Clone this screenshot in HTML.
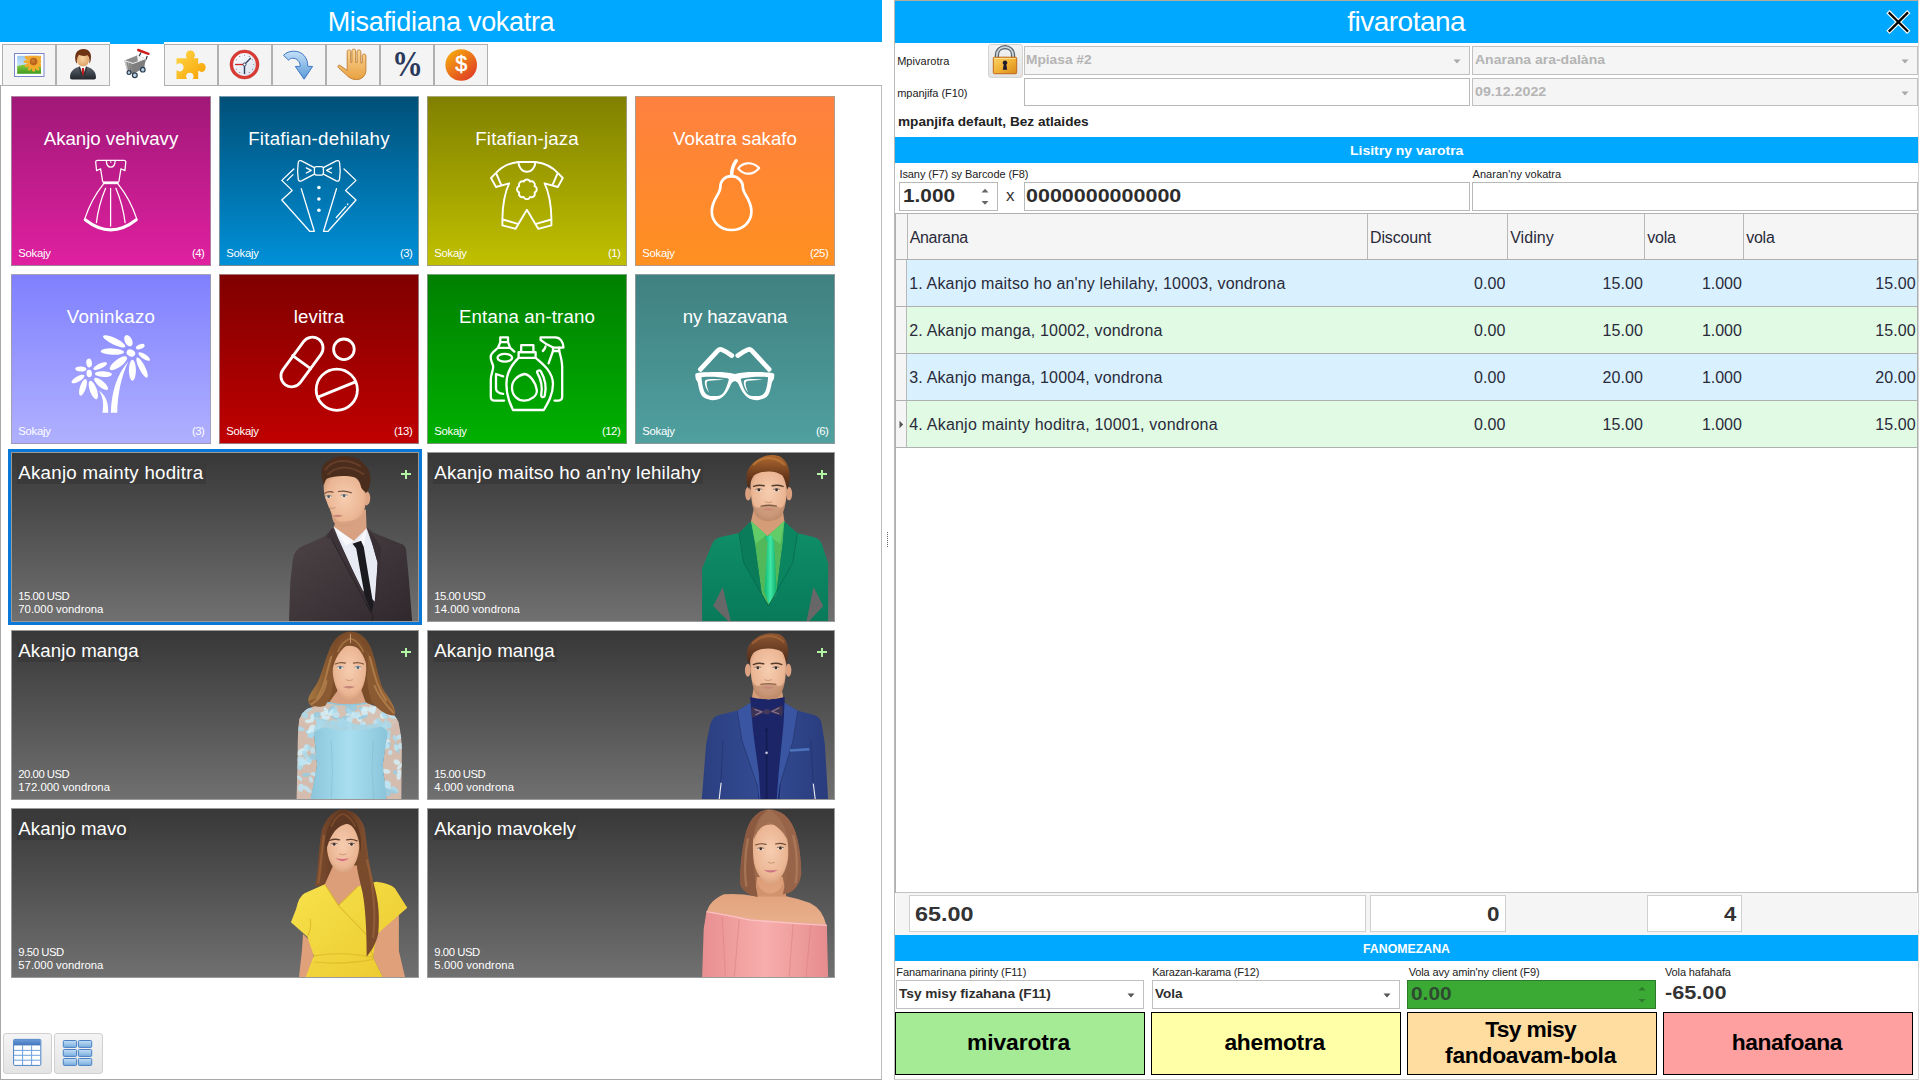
<!DOCTYPE html>
<html><head><meta charset="utf-8"><title>POS</title><style>
html,body{margin:0;padding:0}
body{width:1920px;height:1080px;position:relative;overflow:hidden;background:#fff;font-family:'Liberation Sans',sans-serif}
body>div,body>span,body>svg{position:absolute;box-sizing:border-box}
.t{white-space:pre;line-height:1em}
</style></head>
<body>
<div style="left:0px;top:0px;width:882px;height:42px;background:#00a8ff"></div>
<span class="t" style="left:327.70px;top:9.04px;font-size:27px;color:#fff;letter-spacing:-0.317px;">Misafidiana vokatra</span>
<div style="left:0px;top:85px;width:882px;height:995px;border:1px solid;border-color:#b0b0b0 #bcbcbc #a8a8a8 #a8a8a8;background:#fff"></div>
<div style="left:2px;top:44px;width:54px;height:42px;border:1px solid #b0b0b0;background:#f4f4f4"></div>
<div style="left:56px;top:44px;width:54px;height:42px;border:1px solid #b0b0b0;background:#f4f4f4"></div>
<div style="left:110px;top:42px;width:54px;height:2px;background:#00a8ff"></div>
<div style="left:110px;top:44px;width:54px;height:43px;background:#fff"></div>
<div style="left:164px;top:44px;width:54px;height:42px;border:1px solid #b0b0b0;background:#f4f4f4"></div>
<div style="left:218px;top:44px;width:54px;height:42px;border:1px solid #b0b0b0;background:#f4f4f4"></div>
<div style="left:272px;top:44px;width:54px;height:42px;border:1px solid #b0b0b0;background:#f4f4f4"></div>
<div style="left:326px;top:44px;width:54px;height:42px;border:1px solid #b0b0b0;background:#f4f4f4"></div>
<div style="left:380px;top:44px;width:54px;height:42px;border:1px solid #b0b0b0;background:#f4f4f4"></div>
<div style="left:434px;top:44px;width:54px;height:42px;border:1px solid #b0b0b0;background:#f4f4f4"></div>
<svg style="left:0;top:44px" width="490" height="42" viewBox="0 44 490 42"><defs>
<linearGradient id="gsky" x1="0" y1="0" x2="0" y2="1"><stop offset="0" stop-color="#9ccaf0"/><stop offset="1" stop-color="#e8f4ff"/></linearGradient>
<linearGradient id="ggrass" x1="0" y1="0" x2="0" y2="1"><stop offset="0" stop-color="#8ccc48"/><stop offset="1" stop-color="#3f9a1c"/></linearGradient>
<radialGradient id="gface" cx=".45" cy=".4" r=".7"><stop offset="0" stop-color="#fbd5a5"/><stop offset="1" stop-color="#d99a5c"/></radialGradient>
<linearGradient id="gsuit" x1="0" y1="0" x2="0" y2="1"><stop offset="0" stop-color="#5a626c"/><stop offset="1" stop-color="#22262c"/></linearGradient>
<linearGradient id="gpuz" x1="0" y1="0" x2="1" y2="1"><stop offset="0" stop-color="#ffd84a"/><stop offset="1" stop-color="#f8a000"/></linearGradient>
<linearGradient id="gclk" x1="0" y1="0" x2="1" y2="1"><stop offset="0" stop-color="#ffffff"/><stop offset="1" stop-color="#d4dcec"/></linearGradient>
<linearGradient id="garr" x1="0" y1="0" x2="0" y2="1"><stop offset="0" stop-color="#c4e0f8"/><stop offset="1" stop-color="#5a9ad8"/></linearGradient>
<linearGradient id="ghand" x1="0" y1="0" x2="0" y2="1"><stop offset="0" stop-color="#fbd79a"/><stop offset="1" stop-color="#e8a040"/></linearGradient>
<linearGradient id="gcoin" x1="0.15" y1="0.1" x2="0.85" y2="0.95"><stop offset="0" stop-color="#f4a410"/><stop offset="1" stop-color="#e03c24"/></linearGradient>
<linearGradient id="gcart" x1="0" y1="0" x2="1" y2="0"><stop offset="0" stop-color="#d8d8d8"/><stop offset="1" stop-color="#7a7a7a"/></linearGradient>
</defs><rect x="14.5" y="53.5" width="29.5" height="23" fill="#fff" stroke="#7a86cc" stroke-width="1"/><rect x="17.2" y="55.8" width="23.8" height="18" fill="url(#gsky)"/><path d="M17.2 66 Q24 63.5 29 65 Q35 67 41 64.5 V73.8 H17.2Z" fill="url(#ggrass)"/><clipPath id="picc"><rect x="17.2" y="55.8" width="23.8" height="18"/></clipPath><g clip-path="url(#picc)"><g transform="translate(33.6 61.6)"><ellipse cx="0" cy="-6.600" rx="1.700" ry="3.600" fill="#f6aa2c" transform="rotate(0)"/><ellipse cx="0" cy="-6.600" rx="1.700" ry="3.600" fill="#f6aa2c" transform="rotate(30)"/><ellipse cx="0" cy="-6.600" rx="1.700" ry="3.600" fill="#f6aa2c" transform="rotate(60)"/><ellipse cx="0" cy="-6.600" rx="1.700" ry="3.600" fill="#f6aa2c" transform="rotate(90)"/><ellipse cx="0" cy="-6.600" rx="1.700" ry="3.600" fill="#f6aa2c" transform="rotate(120)"/><ellipse cx="0" cy="-6.600" rx="1.700" ry="3.600" fill="#f6aa2c" transform="rotate(150)"/><ellipse cx="0" cy="-6.600" rx="1.700" ry="3.600" fill="#f6aa2c" transform="rotate(180)"/><ellipse cx="0" cy="-6.600" rx="1.700" ry="3.600" fill="#f6aa2c" transform="rotate(210)"/><ellipse cx="0" cy="-6.600" rx="1.700" ry="3.600" fill="#f6aa2c" transform="rotate(240)"/><ellipse cx="0" cy="-6.600" rx="1.700" ry="3.600" fill="#f6aa2c" transform="rotate(270)"/><ellipse cx="0" cy="-6.600" rx="1.700" ry="3.600" fill="#f6aa2c" transform="rotate(300)"/><ellipse cx="0" cy="-6.600" rx="1.700" ry="3.600" fill="#f6aa2c" transform="rotate(330)"/><circle r="3.8" fill="#b8641c"/><circle r="2" cx="-.5" cy="-.5" fill="#cc7a2a"/></g></g><rect x="36" y="55.8" width="5" height="18" fill="none"/><path d="M70 77.5 C70 71 74 68.5 78.5 67 L83 70 L87.5 67 C92 68.5 96 71 96 77.5 Q96 79.6 93 79.6 H73 Q70 79.6 70 77.5Z" fill="url(#gsuit)"/><path d="M79.2 66.8 L83 78 L86.8 66.8 L83 65Z" fill="#fff"/><path d="M82 68 H84 L84.9 75.5 L83 78.5 L81.1 75.5Z" fill="#c81e1e"/><path d="M78.5 67 L80 66.3 L83.2 77 L82 79.6 Z M87.5 67 L86 66.3 L82.8 77 L84 79.6Z" fill="#30353c"/><ellipse cx="83" cy="59.6" rx="6.1" ry="7" fill="url(#gface)"/><path d="M75.3 59.5 C74.3 52 79 48.6 83.5 48.9 C89 49 92 53 90.8 59.5 C90.6 61.5 90 63 89.2 63.5 C89.8 60 89.5 57 87.5 55.2 C85 56.3 81 56 79.2 54.8 C77.3 56.5 76.5 60 77 63.5 C76 63 75.5 61.5 75.3 59.5Z" fill="#6e3414"/><path d="M141 52.5 L138.5 57.5 M147.2 56 L145.8 60" stroke="#38404a" stroke-width="1.3" fill="none"/><path d="M138.2 50 L148.5 53.8" stroke="#cc1c1c" stroke-width="2.4" stroke-linecap="round"/><path d="M124.3 60.5 L137 55.5 L146 58.5 L144 68 L132.5 74 L127.5 71.5Z" fill="#8c8c8c"/><path d="M137 55.5 L146 58.5 L144.5 66 L138 62Z" fill="#f4f4f4"/><path d="M124.3 60.5 L133 63.5 L132.5 74 L127.5 71.5Z" fill="url(#gcart)"/><path d="M133 63.5 L146 58.5 L144 68 L132.5 74Z" fill="#7e7e7e"/><path d="M124.3 60.5 L133 63.5 L146 58.5" stroke="#efefef" stroke-width="1" fill="none"/><path d="M127 62 L129.3 71.8 M129.5 63 L131 72.6" stroke="#6a6a6a" stroke-width=".7"/><circle cx="129" cy="72.6" r="1.9" fill="#b8d0e4" stroke="#2c3c50" stroke-width="1.2"/><circle cx="134.8" cy="75.2" r="2.4" fill="#b8d0e4" stroke="#2c3c50" stroke-width="1.2"/><circle cx="142.8" cy="69.7" r="2.3" fill="#b8d0e4" stroke="#2c3c50" stroke-width="1.2"/><path d="M176.5 58.3 H187.2 C185.6 56.5 185.4 53.6 187 51.9 C188.8 50 192 50 193.8 51.9 C195.4 53.6 195.2 56.5 193.6 58.3 H198.2 V64.2 C200 62.6 203 62.5 204.5 64.2 C206.2 66 206 69.5 204.2 71 C202.5 72.4 200 72.2 198.2 70.6 V78.9 H192.6 C193.8 77.4 193.9 75.2 192.6 73.8 C191.2 72.3 188.4 72.3 187 73.8 C185.7 75.2 185.8 77.4 187 78.9 H176.5 V70.3 C178.3 71.8 181 71.9 182.5 70.3 C184 68.6 183.9 65.8 182.3 64.3 C180.7 62.9 178.2 63.1 176.5 64.6Z" fill="url(#gpuz)"/><circle cx="244.5" cy="64.5" r="13" fill="url(#gclk)" stroke="#d93a34" stroke-width="3.2"/><circle cx="244.5" cy="64.5" r="14.6" fill="none" stroke="#b82a26" stroke-width=".6" opacity=".6"/><path d="M244.5 64.5 L250.8 58" stroke="#2c3c5c" stroke-width="1.2"/><path d="M244.5 64.5 V74" stroke="#2c3c5c" stroke-width="1.4"/><path d="M244.5 64.5 H235.2" stroke="#d42020" stroke-width="1.3"/><circle cx="244.5" cy="64.5" r="1.5" fill="#fff" stroke="#2c3c5c" stroke-width=".9"/><circle cx="244.5" cy="55.2" r=".45" fill="#445" transform="rotate(0 244.5 64.5)"/><circle cx="244.5" cy="55.2" r=".45" fill="#445" transform="rotate(30 244.5 64.5)"/><circle cx="244.5" cy="55.2" r=".45" fill="#445" transform="rotate(60 244.5 64.5)"/><circle cx="244.5" cy="55.2" r=".45" fill="#445" transform="rotate(90 244.5 64.5)"/><circle cx="244.5" cy="55.2" r=".45" fill="#445" transform="rotate(120 244.5 64.5)"/><circle cx="244.5" cy="55.2" r=".45" fill="#445" transform="rotate(150 244.5 64.5)"/><circle cx="244.5" cy="55.2" r=".45" fill="#445" transform="rotate(180 244.5 64.5)"/><circle cx="244.5" cy="55.2" r=".45" fill="#445" transform="rotate(210 244.5 64.5)"/><circle cx="244.5" cy="55.2" r=".45" fill="#445" transform="rotate(240 244.5 64.5)"/><circle cx="244.5" cy="55.2" r=".45" fill="#445" transform="rotate(270 244.5 64.5)"/><circle cx="244.5" cy="55.2" r=".45" fill="#445" transform="rotate(300 244.5 64.5)"/><circle cx="244.5" cy="55.2" r=".45" fill="#445" transform="rotate(330 244.5 64.5)"/><path d="M283.5 55.3 C286 52.500 290 51.2 293.8 51.2 C302.5 51.2 307.8 57.5 307.8 66.400 H312.6 L304.100 79.2 L295.3 66.4 H300.2 C300.2 61.5 297 58.2 292.2 58.2 C290.8 58.2 289.6 59 288.700 60.3Z" fill="url(#garr)" stroke="#3f78c4" stroke-width="1" stroke-linejoin="round"/><path d="M347.2 70.5 V51.600 C347.2 49.4 350.7 49.4 350.700 51.6 V62.5 H351.9 V50.8 C351.9 48.6 355.7 48.6 355.700 50.800 V62.5 H357.1 V51.6 C357.1 49.400 360.8 49.4 360.8 51.6 V63 H362.2 V55.7 C362.200 53.5 365.9 53.5 365.9 55.700 V70 C365.9 76 361.5 79.6 356.5 79.600 C351.5 79.6 349 77.5 346.5 75 L338.4 67.600 C337 66 338.8 64.4 340.4 65.600Z" fill="url(#ghand)" stroke="#c07a2c" stroke-width=".9" stroke-linejoin="round"/><circle cx="461.2" cy="65" r="15.8" fill="url(#gcoin)"/></svg>
<span class="t" style="left:391.5px;top:45.5px;font-family:'Liberation Serif',serif;font-weight:700;font-size:36px;color:#2b3a5c;transform:scaleX(0.86);transform-origin:0 0">%</span>
<span class="t" style="left:455.22px;top:54.20px;font-size:21.5px;color:#fff;-webkit-text-stroke:0.45px #fff;">$</span>
<div style="left:11px;top:96px;width:200px;height:170px;background:linear-gradient(#a01878,#e020a0);border:1px solid rgba(160,160,160,.75)"></div>
<span class="t" style="left:43.80px;top:129.67px;font-size:18.7px;color:#fff;letter-spacing:-0.043px;">Akanjo vehivavy</span>
<span class="t" style="left:18.30px;top:247.83px;font-size:11.3px;color:#fff;letter-spacing:-0.254px;">Sokajy</span>
<span class="t" style="left:192.00px;top:247.83px;font-size:11.3px;color:#fff;letter-spacing:-0.538px;">(4)</span>
<div style="left:219px;top:96px;width:200px;height:170px;background:linear-gradient(#005078,#0090d8);border:1px solid rgba(160,160,160,.75)"></div>
<span class="t" style="left:248.15px;top:129.67px;font-size:18.7px;color:#fff;letter-spacing:0.269px;">Fitafian-dehilahy</span>
<span class="t" style="left:226.30px;top:247.83px;font-size:11.3px;color:#fff;letter-spacing:-0.254px;">Sokajy</span>
<span class="t" style="left:400.00px;top:247.83px;font-size:11.3px;color:#fff;letter-spacing:-0.538px;">(3)</span>
<div style="left:427px;top:96px;width:200px;height:170px;background:linear-gradient(#808000,#c0c000);border:1px solid rgba(160,160,160,.75)"></div>
<span class="t" style="left:475.35px;top:129.67px;font-size:18.7px;color:#fff;letter-spacing:0.116px;">Fitafian-jaza</span>
<span class="t" style="left:434.30px;top:247.83px;font-size:11.3px;color:#fff;letter-spacing:-0.254px;">Sokajy</span>
<span class="t" style="left:608.00px;top:247.83px;font-size:11.3px;color:#fff;letter-spacing:-0.538px;">(1)</span>
<div style="left:635px;top:96px;width:200px;height:170px;background:linear-gradient(#ff8040,#ff9020);border:1px solid rgba(160,160,160,.75)"></div>
<span class="t" style="left:673.00px;top:129.67px;font-size:18.7px;color:#fff;letter-spacing:0.027px;">Vokatra sakafo</span>
<span class="t" style="left:642.30px;top:247.83px;font-size:11.3px;color:#fff;letter-spacing:-0.254px;">Sokajy</span>
<span class="t" style="left:810.00px;top:247.83px;font-size:11.3px;color:#fff;letter-spacing:-0.473px;">(25)</span>
<div style="left:11px;top:274px;width:200px;height:170px;background:linear-gradient(#8080ff,#b0b0ff);border:1px solid rgba(160,160,160,.75)"></div>
<span class="t" style="left:66.75px;top:307.67px;font-size:18.7px;color:#fff;letter-spacing:0.250px;">Voninkazo</span>
<span class="t" style="left:18.30px;top:425.83px;font-size:11.3px;color:#fff;letter-spacing:-0.254px;">Sokajy</span>
<span class="t" style="left:192.00px;top:425.83px;font-size:11.3px;color:#fff;letter-spacing:-0.538px;">(3)</span>
<div style="left:219px;top:274px;width:200px;height:170px;background:linear-gradient(#800000,#c00000);border:1px solid rgba(160,160,160,.75)"></div>
<span class="t" style="left:293.80px;top:307.67px;font-size:18.7px;color:#fff;letter-spacing:0.077px;">levitra</span>
<span class="t" style="left:226.30px;top:425.83px;font-size:11.3px;color:#fff;letter-spacing:-0.254px;">Sokajy</span>
<span class="t" style="left:394.00px;top:425.83px;font-size:11.3px;color:#fff;letter-spacing:-0.473px;">(13)</span>
<div style="left:427px;top:274px;width:200px;height:170px;background:linear-gradient(#008000,#00b000);border:1px solid rgba(160,160,160,.75)"></div>
<span class="t" style="left:459.00px;top:307.67px;font-size:18.7px;color:#fff;letter-spacing:0.131px;">Entana an-trano</span>
<span class="t" style="left:434.30px;top:425.83px;font-size:11.3px;color:#fff;letter-spacing:-0.254px;">Sokajy</span>
<span class="t" style="left:602.00px;top:425.83px;font-size:11.3px;color:#fff;letter-spacing:-0.473px;">(12)</span>
<div style="left:635px;top:274px;width:200px;height:170px;background:linear-gradient(#408080,#50a0a0);border:1px solid rgba(160,160,160,.75)"></div>
<span class="t" style="left:682.75px;top:307.67px;font-size:18.7px;color:#fff;letter-spacing:-0.135px;">ny hazavana</span>
<span class="t" style="left:642.30px;top:425.83px;font-size:11.3px;color:#fff;letter-spacing:-0.254px;">Sokajy</span>
<span class="t" style="left:816.00px;top:425.83px;font-size:11.3px;color:#fff;letter-spacing:-0.538px;">(6)</span>
<svg style="left:0;top:96px" width="882" height="350" viewBox="0 96 882 350" fill="none" stroke="#fff" stroke-linecap="round" stroke-linejoin="round"><g stroke-width="1.25"><path d="M106.3 160.4 H97.5 Q95.6 160.4 95.7 162.3 L96.6 170.6 L100.6 168.8 L102.6 181.3 M115.2 160.4 H124 Q125.9 160.4 125.8 162.3 L124.9 170.6 L120.9 168.8 L118.9 181.3"/><path d="M106.3 160.4 Q106.6 167.2 110.75 167.2 Q114.9 167.2 115.2 160.4Z"/><path d="M103.2 184.3 C97 192 89 206 84.8 218.6 M118.3 184.3 C124.5 192 132.5 206 136.7 218.6"/><path d="M110.6 188.3 V226 M105.6 188.3 C101.5 198 98 210 96.4 222.6 M115.9 188.3 C120 198 123.5 210 125.1 222.6"/></g><path d="M102.8 182.8 H118.7" stroke-width="2.8" stroke-linecap="butt"/><path d="M85.2 219.8 Q110.75 240 136.3 219.8" stroke-width="3"/><circle cx="110.8" cy="162" r=".8" fill="#fff" stroke="none"/><g stroke-width="1.3"><path d="M314.4 167.6 L301.5 160.9 Q298.6 159.6 298.2 163 Q297 170.8 298.2 178.6 Q298.6 182 301.5 180.8 L314.4 174.2"/><path d="M323.4 167.6 L336.3 160.9 Q339.2 159.6 339.6 163 Q340.8 170.8 339.6 178.6 Q339.2 182 336.3 180.8 L323.4 174.2"/><rect x="314.4" y="166.6" width="9" height="8.5" rx="2"/><path d="M306.3 167.9 L311.2 170.4 L306.3 173 M331.5 167.9 L326.6 170.4 L331.5 173"/><path d="M293.8 169 L281.8 180.4 L292.2 190.4 L281.8 200 L309.7 231.3 H314.3 L301.3 188.7"/><path d="M344 169 L356 180.4 L345.6 190.4 L356 200 L328.1 231.3 H323.5 L336.5 188.7"/><path d="M293 174.6 L287.2 180.4 M345.8 206.6 L336.3 217.5 M347.4 204.6 L347.9 204"/></g><circle cx="318.9" cy="187.5" r="1.8" fill="#fff" stroke="none"/><circle cx="318.9" cy="199" r="1.8" fill="#fff" stroke="none"/><circle cx="318.9" cy="210.3" r="1.8" fill="#fff" stroke="none"/><g stroke-width="1.9"><path d="M518.4 162 H535.4 M518.4 162 C509 163 500.5 168 495.8 173.2 L491 178 L496 187 L509.2 183.3 C505 192 502.6 204 502.4 219.3 V225.4 L515.6 228.8 L526.9 209.8 L538.2 228.8 L551.4 225.4 V219.3 C551.2 204 548.8 192 544.6 183.3 L557.8 187 L562.8 178 L558 173.2 C553.3 168 544.8 163 535.4 162"/><path d="M518.4 162 A8.5 9.8 0 0 0 535.4 162"/><path d="M496.5 174 L501.2 184.8 M557.3 174 L552.6 184.8 M502.6 219.5 L517.8 223.8 M551.2 219.5 L536 223.8"/><path d="M523.72 181.63 A3.4 3.4 0 0 1 530.08 181.63 A3.4 3.4 0 0 1 534.57 186.12 A3.4 3.4 0 0 1 534.57 192.48 A3.4 3.4 0 0 1 530.08 196.97 A3.4 3.4 0 0 1 523.72 196.97 A3.4 3.4 0 0 1 519.23 192.48 A3.4 3.4 0 0 1 519.23 186.12 A3.4 3.4 0 0 1 523.72 181.63 Z"/></g><path d="M731.3 176.2 C724 176.5 720.3 181.5 720.3 187.5 C720.3 194 711.8 199.5 711.8 211.5 C711.8 222 720.5 230 731.6 230 C742.7 230 751.4 222 751.4 211.5 C751.4 199.5 742.9 194 742.9 187.5 C742.9 181.5 738.6 176.5 731.3 176.2Z" stroke-width="2.7"/><path d="M731.6 175.5 C731.6 169.5 733.5 164.5 736.2 160.8" stroke-width="3.6"/><path d="M738.2 168.6 C742 162.5 751.5 160.8 759.2 168 C753 175.5 744 175.5 738.2 168.6Z" stroke-width="2.2"/><g fill="#fff" stroke="none"><ellipse cx="114.2" cy="341.3" rx="12.25" ry="3.3" transform="rotate(26 114.2 341.3)"/><ellipse cx="128.4" cy="340.7" rx="6.0" ry="3.6" transform="rotate(62 128.4 340.7)"/><ellipse cx="140.3" cy="346.6" rx="4.6" ry="2.3" transform="rotate(-22 140.3 346.6)"/><ellipse cx="112.4" cy="351.6" rx="11.75" ry="3.2" transform="rotate(2 112.4 351.6)"/><ellipse cx="144.2" cy="356.5" rx="6.75" ry="2.4" transform="rotate(33 144.2 356.5)"/><ellipse cx="118.4" cy="363.2" rx="10.5" ry="3.8" transform="rotate(-37 118.4 363.2)"/><ellipse cx="132.4" cy="370.3" rx="10.5" ry="3.5" transform="rotate(90 132.4 370.3)"/><ellipse cx="142.1" cy="367.6" rx="11.25" ry="3.0" transform="rotate(63 142.1 367.6)"/><ellipse cx="130.9" cy="353" rx="4.5" ry="3.3" transform="rotate(28 130.9 353)"/><ellipse cx="89.1" cy="363" rx="4.4" ry="2.8" transform="rotate(82 89.1 363)"/><ellipse cx="100.2" cy="366.1" rx="7.5" ry="2.5" transform="rotate(-25 100.2 366.1)"/><ellipse cx="80.8" cy="369" rx="5.6" ry="2.5" transform="rotate(2 80.8 369)"/><ellipse cx="103.4" cy="374.1" rx="8.5" ry="2.9" transform="rotate(3 103.4 374.1)"/><ellipse cx="78" cy="379" rx="7.3" ry="2.7" transform="rotate(-30 78 379)"/><ellipse cx="83" cy="387.3" rx="8.75" ry="3.0" transform="rotate(-72 83 387.3)"/><ellipse cx="93.3" cy="390" rx="9.75" ry="3.5" transform="rotate(70 93.3 390)"/><ellipse cx="101.1" cy="383.9" rx="8.75" ry="3.1" transform="rotate(40 101.1 383.9)"/><ellipse cx="89.2" cy="373.5" rx="3.7" ry="2.7" transform="rotate(85 89.2 373.5)"/><path d="M110.8 412.8 C111.5 392 117 374 128.3 361.5 C121.5 376 117.5 394 117.2 412.8Z"/><path d="M102.4 412.8 C104.2 404 102.8 396.5 99 390.8 C105 394.5 108.6 402 108.2 412.8Z"/></g><g stroke-width="2.8"><rect x="273.8" y="351.2" width="56.4" height="21.6" rx="10.8" transform="rotate(-53.8 302 362)"/><path d="M292.7 355.6 L310.6 368.7"/><circle cx="343.9" cy="349.3" r="10.3"/><circle cx="336.8" cy="389.7" r="20.6"/><path d="M318.6 396.9 L355.4 381.9"/></g><g stroke-width="2.3"><rect x="521.2" y="345.2" width="12.2" height="7" /><rect x="518.6" y="352.2" width="17" height="5.6"/><path d="M518.6 357.8 C512 364 506.4 372 506.4 384 C506.4 394 509 402 513 410 H543.8 C548.5 402 553 394 553 384 C553 372 543 364 535.6 357.8"/><path d="M524.5 374 C517 375.5 511.8 381 512 388 C512.3 396 518 401 524.5 400.6 C531 400.3 537.5 396 536.8 390 C536 383 530 374.5 524.5 374Z"/><path d="M537.2 372.6 C536.5 370.5 540 369.5 541 371.6 C545.5 379.5 546.5 388 544.8 395.5 C544.2 398 540.8 397.5 541.2 395 C542.5 388 541.5 380 537.2 372.6Z"/><path d="M500.3 342.2 V337.4 H508 V342.2 M498 347.8 L500.3 342.2 H508 L510.2 347.8 M514.3 351.6 L510.2 347.8 H498 C495.5 350.5 491.5 352.5 490.8 356 C490 360.5 493.2 363.5 493.2 366.8 C493.2 371 490.8 374 490.8 380 V396.8 Q490.8 400.6 494.6 400.6 H504.2"/><ellipse cx="504.8" cy="357.7" rx="7.3" ry="3.9"/><path d="M503.2 376.4 L496 374 V388.5 Q496 393 503.2 393.8"/><path d="M540.6 337.4 H555.5 C560 337.4 563.4 342 563.5 347.6 H553 L545.4 343.4 L540.6 340Z"/><path d="M545.6 346.4 C545 348.5 544 350 542.8 351"/><path d="M553 347.6 V351 L548.6 363.4 M559.2 347.6 V350.8 C560.5 356 562.2 361 562.2 367 V396.6 Q562.2 400.6 558.4 400.6 H554.5"/><path d="M553 351 H559.2"/></g><g fill="#fff" stroke="none"><path fill-rule="evenodd" d="M734.8 373.9 C729 372.6 722 372.1 717.3 372.1 C710 372.1 704 372.3 700.7 372.5 C697 372.7 695.1 373.3 695.25 375 C695.4 376.5 695.5 377.8 695.8 379 C696.3 380.5 697.3 381.2 697.7 382.4 C698.5 386.5 699.3 390.5 700.7 393.8 C702 396.5 703.5 397.8 705.7 398.6 C708 399.5 710 400.1 712.3 400.2 C715 400.3 717.5 399.8 719.8 398.8 C722.2 397.6 724.2 395.8 725.7 393.8 C727.8 391 729.3 388 730.7 384.7 C731.5 383 732.2 382.2 733.2 381.7 C733.8 381.4 734.3 381.3 734.8 381.3 C735.3 381.3 735.8 381.4 736.4 381.7 C737.4 382.2 738.1 383 738.9 384.7 C740.3 388 741.8 391 743.9 393.8 C745.4 395.8 747.4 397.6 749.8 398.8 C752.1 399.8 754.6 400.3 757.3 400.2 C759.6 400.1 761.6 399.5 763.9 398.6 C766.1 397.8 767.6 396.5 768.9 393.8 C770.3 390.5 771.1 386.5 771.9 382.4 C772.3 381.2 773.3 380.5 773.8 379 C774.1 377.8 774.2 376.5 774.35 375 C774.5 373.3 772.6 372.7 768.9 372.5 C765.6 372.3 759.6 372.1 752.3 372.1 C747.6 372.1 740.6 372.6 734.8 373.9Z M701.6 378.4 C701.3 377.500 701.800 377 702.800 376.900 C711 376.300 720 376.800 727.400 378.200 C728.600 378.500 729 379.200 728.600 380.400 C727.300 385 725.800 389.200 723.6 392.600 C722 394.800 719.800 395.900 717.3 396 C715 396.100 712.800 396.100 710.7 395.900 C708 395.600 705.900 394.300 704.4 391.750 C702.800 388 702 383 701.6 378.4Z M768 378.4 C768.3 377.5 767.8 377 766.8 376.9 C758.6 376.3 749.6 376.8 742.2 378.2 C741 378.5 740.6 379.2 741 380.4 C742.3 385 743.8 389.2 746 392.6 C747.6 394.8 749.8 395.9 752.3 396 C754.6 396.1 756.8 396.1 758.9 395.9 C761.6 395.6 763.7 394.3 765.2 391.75 C766.8 388 767.6 383 768 378.4Z"/><path d="M709.2 392.4 C707 390 705.600 387.500 705.2 385.200 C704.700 383 704.700 381.800 705 380.900 C705.400 379.800 706.500 379.300 709 379.150 C714 378.800 719.500 379 724.2 379.700 C719 379.900 713 380.200 709.500 380.700 C707.500 381 706.600 381.700 706.600 383.200 C706.600 386 707.600 389.500 709.2 392.400Z"/><path d="M748.2 392.4 C746 390 744.6 387.5 744.2 385.2 C743.7 383 743.7 381.8 744 380.9 C744.4 379.8 745.5 379.3 748 379.15 C753 378.8 758.5 379 763.2 379.7 C758 379.9 752 380.2 748.5 380.7 C746.5 381 745.6 381.7 745.6 383.2 C745.6 386 746.6 389.5 748.2 392.4Z"/></g><path d="M700.4 369.400 L717.8 350.600 Q719.600 348.800 722.200 349.900 C725.500 351.300 729 353.300 731.8 355.600 M769.2 369.4 L751.8 350.6 Q750 348.8 747.4 349.9 C744.100 351.300 740.600 353.300 737.8 355.600" stroke-width="4.700" stroke-linecap="round"/></svg>
<div style="left:8px;top:449px;width:414px;height:176px;border:3px solid #0a78d7;background:#fff"></div>
<div style="left:11px;top:452px;width:408px;height:170px;background:linear-gradient(#383838,#707070);border:1px solid #9a9a9a"></div>
<svg style="left:270px;top:450px" width="150" height="174" viewBox="0 0 931 1080"><defs><clipPath id="pc1"><rect x="0" y="19" width="918" height="1042"/></clipPath><radialGradient id="fg1" cx=".5" cy=".45" r=".62"><stop offset="0" stop-color="#f6cdb0"/><stop offset=".7" stop-color="#ebb694"/><stop offset="1" stop-color="#cf9774"/></radialGradient><linearGradient id="p1s" x1="0" y1="0" x2="1" y2="1"><stop offset="0" stop-color="#4e4448"/><stop offset="1" stop-color="#2f282c"/></linearGradient></defs><g clip-path="url(#pc1)"><path d="M385 485 L340 535 L200 598 Q152 618 142 680 L126 820 L118 1062 H882 L862 800 L844 615 Q840 592 815 583 L640 512 L600 480Z" fill="url(#p1s)"/><path d="M430 390 L595 370 L600 500 L520 570 L395 480Z" fill="#d8a282"/><path d="M395 476 L520 565 L600 485 L640 600 L668 700 L650 940 L575 870 L500 720 L430 565Z" fill="#e9ebf4"/><path d="M395 476 L470 595 L520 565Z M600 485 L585 590 L545 570Z" fill="#f7f8fc"/><path d="M512 582 L565 563 L582 602 L642 965 L628 1015 L598 960 L535 612Z" fill="#1b1b1f"/><path d="M385 485 L350 540 L385 560 L640 1030 L600 935 L430 565Z" fill="#3c3338"/><path d="M385 560 L640 1030" stroke="#241e21" stroke-width="5"/><path d="M618 505 L690 600 L665 960 L640 1030 L655 935 L668 700 L640 600Z" fill="#372f33"/><path d="M640 1030 L632 1062" stroke="#221c1f" stroke-width="5"/><ellipse cx="598" cy="300" rx="24" ry="44" fill="#e0a585"/><path d="M336 150 C328 250 338 290 352 320 C358 340 364 352 370 362 C376 380 384 400 388 425 C392 450 410 470 440 476 C490 484 545 455 575 400 C600 350 604 260 580 150Z" fill="url(#fg1)"/><path d="M372 362 C378 385 385 405 388 425 C392 450 410 470 440 476 C490 484 545 455 575 400 C540 440 470 450 420 440 C400 420 385 390 372 362Z" fill="#d09a78" opacity=".6"/><path d="M334 222 C322 180 308 130 330 95 C345 70 370 70 385 55 C420 35 470 32 505 45 C535 42 565 60 585 90 C612 110 630 160 622 205 C618 235 608 255 596 268 C584 252 572 246 566 232 C560 205 550 182 528 170 C470 156 400 158 352 178 C342 190 338 204 334 222Z" fill="#4b2d1e"/><path d="M345 120 C390 60 480 50 560 100 M360 150 C420 95 500 95 580 150" stroke="#70452c" stroke-width="12" fill="none" opacity=".7" stroke-linecap="round"/><ellipse cx="364" cy="290" rx="19" ry="9" fill="#f4ece6" opacity=".8"/><circle cx="364" cy="290" r="8.5" fill="#4a5a62"/><path d="M343 287 Q364 276 385 287" stroke="#4a5a62" stroke-width="4.500" fill="none" opacity=".85"/><ellipse cx="460" cy="284" rx="19" ry="9" fill="#f4ece6" opacity=".8"/><circle cx="460" cy="284" r="8.5" fill="#4a5a62"/><path d="M439 281 Q460 270 481 281" stroke="#4a5a62" stroke-width="4.500" fill="none" opacity=".85"/><path d="M340 268 Q366.0 253 392 262" stroke="#5a3a28" stroke-width="7" stroke-linecap="round" fill="none" opacity=".85"/><path d="M425 258 Q465.0 249 505 266" stroke="#5a3a28" stroke-width="7" stroke-linecap="round" fill="none" opacity=".85"/><path d="M388.0 408 Q420 396 452.0 408 Q420 426 388.0 408Z" fill="#c98676"/><path d="M365 358 Q385 370 405 358" stroke="#c08a6a" stroke-width="6" fill="none" opacity=".8" stroke-linecap="round"/></g></svg>
<div style="left:17px;top:460.5px;width:188.5px;height:23px;background:#3a3a3a"></div>
<span class="t" style="left:18.30px;top:463.57px;font-size:18.7px;color:#fff;letter-spacing:0.252px;">Akanjo mainty hoditra</span>
<span class="t" style="left:18.30px;top:591.03px;font-size:11.3px;color:#fff;letter-spacing:-0.474px;">15.00 USD</span>
<span class="t" style="left:18.30px;top:603.83px;font-size:11.3px;color:#fff;letter-spacing:0.013px;">70.000 vondrona</span>
<div style="left:401px;top:473.3px;width:9.5px;height:1.8px;background:#b4f5a5"></div>
<div style="left:404.8px;top:469.5px;width:1.8px;height:9.5px;background:#b4f5a5"></div>
<div style="left:427px;top:452px;width:408px;height:170px;background:linear-gradient(#383838,#707070);border:1px solid #9a9a9a"></div>
<svg style="left:686px;top:450px" width="150" height="174" viewBox="0 0 931 1080"><defs><clipPath id="pc2"><rect x="0" y="19" width="918" height="1042"/></clipPath><radialGradient id="fg2" cx=".5" cy=".45" r=".62"><stop offset="0" stop-color="#f6cdb0"/><stop offset=".7" stop-color="#ebb694"/><stop offset="1" stop-color="#cf9774"/></radialGradient><linearGradient id="p2s" x1="0" y1="0" x2="0" y2="1"><stop offset="0" stop-color="#0f9068"/><stop offset="1" stop-color="#087a5a"/></linearGradient><linearGradient id="p2h" x1="0" y1="0" x2="0" y2="1"><stop offset="0" stop-color="#b06a30"/><stop offset=".6" stop-color="#6a3a1c"/><stop offset="1" stop-color="#45281a"/></linearGradient><linearGradient id="p2t" x1="0" y1="0" x2="1" y2="0"><stop offset="0" stop-color="#0fb870"/><stop offset=".5" stop-color="#3fe6a6"/><stop offset="1" stop-color="#0fae6a"/></linearGradient></defs><g clip-path="url(#pc2)"><path d="M400 445 L330 515 L215 540 Q170 550 155 600 L100 735 V1062 H882 V705 L845 590 Q835 552 790 540 L690 515 L612 445Z" fill="url(#p2s)"/><path d="M228 850 L168 968 L262 1062 L278 1062 L240 905Z M792 850 L852 968 L765 1062 L748 1062 L780 905Z" fill="#676767"/><path d="M420 370 H600 L612 450 L505 535 L402 450Z" fill="#d59c78"/><path d="M405 442 L505 535 L610 442 L602 565 L560 895 L512 962 L470 895 L425 565Z" fill="#52b85a"/><path d="M405 442 L500 528 L430 582Z M610 442 L512 528 L585 585Z" fill="#62cc68"/><path d="M488 537 L532 530 L548 572 L562 880 L514 956 L487 880 L506 572Z" fill="url(#p2t)"/><path d="M400 445 L328 518 L358 700 L512 968 L470 890 L425 565Z" fill="#0a7c5a"/><path d="M612 445 L692 518 L662 700 L512 968 L560 890 L602 565Z" fill="#0b8460"/><path d="M328 518 L358 700 L512 968 L662 700 L692 518" stroke="#066446" stroke-width="5" fill="none" opacity=".8"/><ellipse cx="386" cy="272" rx="19" ry="42" fill="#dba07e"/><ellipse cx="640" cy="272" rx="19" ry="42" fill="#dba07e"/><path d="M400 120 H626 C630 290 620 360 590 410 C560 452 470 452 438 410 C408 360 398 290 400 120Z" fill="url(#fg2)"/><path d="M408 320 C418 380 430 400 438 410 C470 452 560 452 590 410 C600 395 612 370 618 320 C595 390 565 340 513 340 C465 340 435 390 408 320Z" fill="#8a5c40" opacity=".32"/><path d="M392 245 C370 200 368 150 395 105 C430 55 500 20 570 35 C620 50 650 110 642 180 C640 210 635 235 628 245 C620 210 612 180 600 160 C560 125 460 125 420 160 C402 185 398 215 392 245Z" fill="url(#p2h)"/><path d="M420 90 C470 40 550 35 610 90" stroke="#c8803c" stroke-width="14" fill="none" opacity=".6" stroke-linecap="round"/><ellipse cx="452" cy="248" rx="19" ry="9" fill="#f4ece6" opacity=".8"/><circle cx="452" cy="248" r="8.5" fill="#3a2c24"/><path d="M431 245 Q452 234 473 245" stroke="#3a2c24" stroke-width="4.500" fill="none" opacity=".85"/><ellipse cx="562" cy="248" rx="19" ry="9" fill="#f4ece6" opacity=".8"/><circle cx="562" cy="248" r="8.5" fill="#3a2c24"/><path d="M541 245 Q562 234 583 245" stroke="#3a2c24" stroke-width="4.500" fill="none" opacity=".85"/><path d="M420 226 Q452.5 213 485 222" stroke="#3a2418" stroke-width="9" stroke-linecap="round" fill="none" opacity=".85"/><path d="M535 222 Q568.5 213 602 226" stroke="#3a2418" stroke-width="9" stroke-linecap="round" fill="none" opacity=".85"/><path d="M477.0 368 Q513 356 549.0 368 Q513 386 477.0 368Z" fill="#d08878"/><path d="M493 322 Q513 334 533 322" stroke="#c08a6a" stroke-width="6" fill="none" opacity=".8" stroke-linecap="round"/><path d="M466 348 Q513 338 562 348" stroke="#6a4630" stroke-width="8" fill="none" stroke-linecap="round" opacity=".8"/></g></svg>
<div style="left:433px;top:460.5px;width:270.1px;height:23px;background:#3a3a3a"></div>
<span class="t" style="left:434.30px;top:463.57px;font-size:18.7px;color:#fff;letter-spacing:0.174px;">Akanjo maitso ho an&#x27;ny lehilahy</span>
<span class="t" style="left:434.30px;top:591.03px;font-size:11.3px;color:#fff;letter-spacing:-0.474px;">15.00 USD</span>
<span class="t" style="left:434.30px;top:603.83px;font-size:11.3px;color:#fff;letter-spacing:0.046px;">14.000 vondrona</span>
<div style="left:817px;top:473.3px;width:9.5px;height:1.8px;background:#b4f5a5"></div>
<div style="left:820.8px;top:469.5px;width:1.8px;height:9.5px;background:#b4f5a5"></div>
<div style="left:11px;top:630px;width:408px;height:170px;background:linear-gradient(#383838,#707070);border:1px solid #9a9a9a"></div>
<svg style="left:270px;top:628px" width="150" height="174" viewBox="0 0 931 1080"><defs><clipPath id="pc3"><rect x="0" y="19" width="918" height="1042"/></clipPath><radialGradient id="fg3" cx=".5" cy=".45" r=".62"><stop offset="0" stop-color="#f6cdb0"/><stop offset=".7" stop-color="#ebb694"/><stop offset="1" stop-color="#cf9774"/></radialGradient><linearGradient id="p3h" x1="0" y1="0" x2="1" y2="0"><stop offset="0" stop-color="#a87842"/><stop offset=".3" stop-color="#7a4c28"/><stop offset=".7" stop-color="#7a4c28"/><stop offset="1" stop-color="#a87440"/></linearGradient><linearGradient id="p3d" x1="0" y1="0" x2="1" y2="0"><stop offset="0" stop-color="#8cc6dc"/><stop offset=".5" stop-color="#a8deef"/><stop offset="1" stop-color="#8ac4da"/></linearGradient></defs><g clip-path="url(#pc3)"><path d="M500 22 C440 25 395 70 370 130 C340 200 330 260 298 330 C270 385 235 415 238 455 C245 498 300 502 350 482 L640 470 C690 522 750 552 776 542 C784 490 740 440 702 380 C675 320 662 230 636 150 C615 80 570 25 500 22Z" fill="url(#p3h)"/><path d="M425 380 H565 L600 480 H355Z" fill="#d8a282"/><path d="M355 462 Q480 490 600 466 L745 520 Q800 560 800 610 L725 650 H275 L180 585 Q185 530 235 500Z" fill="#d6c2b4"/><path d="M182 560 Q170 650 172 760 L165 1062 H255 L292 850 L272 640Z" fill="#d4bcae"/><path d="M795 575 Q822 680 818 800 L815 1062 H722 L700 850 L728 640Z" fill="#d4bcae"/><clipPath id="p3c"><path d="M355 462 Q480 490 600 466 L745 520 Q800 560 800 610 Q822 680 818 800 L815 1062 H165 L172 760 Q170 650 182 560 Q185 530 235 500Z"/></clipPath><g clip-path="url(#p3c)"><ellipse cx="299" cy="576" rx="17" ry="15" fill="#a9d9ec" opacity=".85" transform="rotate(66 299 576)"/><ellipse cx="736" cy="657" rx="24" ry="12" fill="#a9d9ec" opacity=".85" transform="rotate(99 736 657)"/><ellipse cx="727" cy="716" rx="27" ry="19" fill="#d4eef8" opacity=".85" transform="rotate(104 727 716)"/><ellipse cx="338" cy="565" rx="18" ry="14" fill="#98cde2" opacity=".85" transform="rotate(97 338 565)"/><ellipse cx="244" cy="646" rx="26" ry="12" fill="#a9d9ec" opacity=".85" transform="rotate(18 244 646)"/><ellipse cx="238" cy="823" rx="26" ry="18" fill="#d4eef8" opacity=".85" transform="rotate(84 238 823)"/><ellipse cx="353" cy="517" rx="30" ry="11" fill="#d4eef8" opacity=".85" transform="rotate(54 353 517)"/><ellipse cx="788" cy="744" rx="34" ry="11" fill="#98cde2" opacity=".85" transform="rotate(75 788 744)"/><ellipse cx="486" cy="500" rx="28" ry="18" fill="#98cde2" opacity=".85" transform="rotate(103 486 500)"/><ellipse cx="409" cy="557" rx="30" ry="11" fill="#98cde2" opacity=".85" transform="rotate(17 409 557)"/><ellipse cx="584" cy="503" rx="29" ry="16" fill="#d4eef8" opacity=".85" transform="rotate(179 584 503)"/><ellipse cx="429" cy="579" rx="16" ry="15" fill="#a9d9ec" opacity=".85" transform="rotate(30 429 579)"/><ellipse cx="336" cy="531" rx="29" ry="14" fill="#d4eef8" opacity=".85" transform="rotate(165 336 531)"/><ellipse cx="464" cy="564" rx="32" ry="18" fill="#98cde2" opacity=".85" transform="rotate(156 464 564)"/><ellipse cx="274" cy="907" rx="23" ry="12" fill="#bfe4f2" opacity=".85" transform="rotate(15 274 907)"/><ellipse cx="345" cy="556" rx="27" ry="13" fill="#d4eef8" opacity=".85" transform="rotate(1 345 556)"/><ellipse cx="237" cy="743" rx="18" ry="19" fill="#a9d9ec" opacity=".85" transform="rotate(171 237 743)"/><ellipse cx="698" cy="614" rx="28" ry="16" fill="#d4eef8" opacity=".85" transform="rotate(72 698 614)"/><ellipse cx="567" cy="503" rx="17" ry="12" fill="#98cde2" opacity=".85" transform="rotate(29 567 503)"/><ellipse cx="188" cy="855" rx="26" ry="19" fill="#a9d9ec" opacity=".85" transform="rotate(110 188 855)"/><ellipse cx="776" cy="684" rx="21" ry="13" fill="#a9d9ec" opacity=".85" transform="rotate(66 776 684)"/><ellipse cx="486" cy="617" rx="25" ry="13" fill="#98cde2" opacity=".85" transform="rotate(26 486 617)"/><ellipse cx="224" cy="911" rx="25" ry="12" fill="#98cde2" opacity=".85" transform="rotate(171 224 911)"/><ellipse cx="516" cy="498" rx="26" ry="20" fill="#98cde2" opacity=".85" transform="rotate(155 516 498)"/><ellipse cx="266" cy="760" rx="20" ry="15" fill="#bfe4f2" opacity=".85" transform="rotate(90 266 760)"/><ellipse cx="254" cy="941" rx="20" ry="12" fill="#bfe4f2" opacity=".85" transform="rotate(72 254 941)"/><ellipse cx="488" cy="586" rx="34" ry="18" fill="#bfe4f2" opacity=".85" transform="rotate(85 488 586)"/><ellipse cx="271" cy="801" rx="33" ry="20" fill="#98cde2" opacity=".85" transform="rotate(172 271 801)"/><ellipse cx="272" cy="554" rx="22" ry="15" fill="#a9d9ec" opacity=".85" transform="rotate(177 272 554)"/><ellipse cx="577" cy="595" rx="18" ry="17" fill="#bfe4f2" opacity=".85" transform="rotate(164 577 595)"/><ellipse cx="314" cy="594" rx="22" ry="18" fill="#d4eef8" opacity=".85" transform="rotate(175 314 594)"/><ellipse cx="628" cy="506" rx="19" ry="20" fill="#d4eef8" opacity=".85" transform="rotate(5 628 506)"/><ellipse cx="730" cy="975" rx="34" ry="17" fill="#bfe4f2" opacity=".85" transform="rotate(63 730 975)"/><ellipse cx="659" cy="586" rx="18" ry="17" fill="#bfe4f2" opacity=".85" transform="rotate(25 659 586)"/><ellipse cx="736" cy="728" rx="21" ry="12" fill="#98cde2" opacity=".85" transform="rotate(106 736 728)"/><ellipse cx="259" cy="627" rx="29" ry="19" fill="#d4eef8" opacity=".85" transform="rotate(119 259 627)"/><ellipse cx="803" cy="676" rx="19" ry="15" fill="#bfe4f2" opacity=".85" transform="rotate(157 803 676)"/><ellipse cx="253" cy="667" rx="19" ry="16" fill="#a9d9ec" opacity=".85" transform="rotate(22 253 667)"/><ellipse cx="503" cy="564" rx="30" ry="11" fill="#bfe4f2" opacity=".85" transform="rotate(101 503 564)"/><ellipse cx="238" cy="507" rx="24" ry="10" fill="#a9d9ec" opacity=".85" transform="rotate(161 238 507)"/><ellipse cx="555" cy="558" rx="25" ry="17" fill="#d4eef8" opacity=".85" transform="rotate(81 555 558)"/><ellipse cx="202" cy="835" rx="32" ry="19" fill="#bfe4f2" opacity=".85" transform="rotate(166 202 835)"/><ellipse cx="729" cy="672" rx="24" ry="11" fill="#a9d9ec" opacity=".85" transform="rotate(43 729 672)"/><ellipse cx="383" cy="510" rx="30" ry="19" fill="#98cde2" opacity=".85" transform="rotate(116 383 510)"/><ellipse cx="705" cy="616" rx="20" ry="20" fill="#d4eef8" opacity=".85" transform="rotate(72 705 616)"/><ellipse cx="586" cy="523" rx="29" ry="20" fill="#d4eef8" opacity=".85" transform="rotate(73 586 523)"/><ellipse cx="392" cy="585" rx="16" ry="16" fill="#a9d9ec" opacity=".85" transform="rotate(79 392 585)"/><ellipse cx="502" cy="532" rx="33" ry="11" fill="#bfe4f2" opacity=".85" transform="rotate(165 502 532)"/><ellipse cx="725" cy="734" rx="17" ry="18" fill="#bfe4f2" opacity=".85" transform="rotate(49 725 734)"/><ellipse cx="800" cy="911" rx="33" ry="14" fill="#d4eef8" opacity=".85" transform="rotate(97 800 911)"/><ellipse cx="187" cy="626" rx="28" ry="14" fill="#a9d9ec" opacity=".85" transform="rotate(13 187 626)"/><ellipse cx="256" cy="638" rx="31" ry="11" fill="#d4eef8" opacity=".85" transform="rotate(155 256 638)"/><ellipse cx="767" cy="547" rx="32" ry="16" fill="#bfe4f2" opacity=".85" transform="rotate(8 767 547)"/><ellipse cx="812" cy="733" rx="19" ry="19" fill="#bfe4f2" opacity=".85" transform="rotate(113 812 733)"/><ellipse cx="493" cy="517" rx="22" ry="10" fill="#a9d9ec" opacity=".85" transform="rotate(45 493 517)"/><ellipse cx="496" cy="617" rx="25" ry="12" fill="#d4eef8" opacity=".85" transform="rotate(80 496 617)"/><ellipse cx="231" cy="1000" rx="33" ry="13" fill="#bfe4f2" opacity=".85" transform="rotate(39 231 1000)"/><ellipse cx="677" cy="583" rx="27" ry="14" fill="#a9d9ec" opacity=".85" transform="rotate(63 677 583)"/><ellipse cx="716" cy="889" rx="32" ry="14" fill="#d4eef8" opacity=".85" transform="rotate(10 716 889)"/><ellipse cx="782" cy="741" rx="20" ry="13" fill="#bfe4f2" opacity=".85" transform="rotate(83 782 741)"/><ellipse cx="217" cy="541" rx="22" ry="20" fill="#a9d9ec" opacity=".85" transform="rotate(58 217 541)"/><ellipse cx="746" cy="773" rx="16" ry="14" fill="#bfe4f2" opacity=".85" transform="rotate(85 746 773)"/><ellipse cx="646" cy="506" rx="31" ry="11" fill="#d4eef8" opacity=".85" transform="rotate(106 646 506)"/><ellipse cx="384" cy="524" rx="27" ry="15" fill="#d4eef8" opacity=".85" transform="rotate(135 384 524)"/><ellipse cx="787" cy="833" rx="21" ry="16" fill="#d4eef8" opacity=".85" transform="rotate(26 787 833)"/><ellipse cx="257" cy="663" rx="25" ry="15" fill="#a9d9ec" opacity=".85" transform="rotate(150 257 663)"/><ellipse cx="773" cy="1004" rx="28" ry="17" fill="#a9d9ec" opacity=".85" transform="rotate(41 773 1004)"/><ellipse cx="569" cy="615" rx="23" ry="15" fill="#a9d9ec" opacity=".85" transform="rotate(9 569 615)"/><ellipse cx="244" cy="820" rx="16" ry="18" fill="#a9d9ec" opacity=".85" transform="rotate(135 244 820)"/><ellipse cx="184" cy="932" rx="21" ry="11" fill="#bfe4f2" opacity=".85" transform="rotate(48 184 932)"/><ellipse cx="576" cy="553" rx="31" ry="11" fill="#98cde2" opacity=".85" transform="rotate(164 576 553)"/><ellipse cx="777" cy="896" rx="17" ry="11" fill="#98cde2" opacity=".85" transform="rotate(46 777 896)"/><ellipse cx="191" cy="817" rx="25" ry="20" fill="#bfe4f2" opacity=".85" transform="rotate(18 191 817)"/><ellipse cx="206" cy="832" rx="24" ry="15" fill="#bfe4f2" opacity=".85" transform="rotate(21 206 832)"/><ellipse cx="263" cy="554" rx="21" ry="11" fill="#d4eef8" opacity=".85" transform="rotate(91 263 554)"/><ellipse cx="754" cy="1014" rx="33" ry="11" fill="#98cde2" opacity=".85" transform="rotate(16 754 1014)"/><ellipse cx="728" cy="973" rx="25" ry="19" fill="#bfe4f2" opacity=".85" transform="rotate(127 728 973)"/><ellipse cx="701" cy="544" rx="19" ry="19" fill="#d4eef8" opacity=".85" transform="rotate(123 701 544)"/><ellipse cx="293" cy="538" rx="22" ry="18" fill="#98cde2" opacity=".85" transform="rotate(0 293 538)"/><ellipse cx="727" cy="1018" rx="29" ry="19" fill="#98cde2" opacity=".85" transform="rotate(52 727 1018)"/><ellipse cx="432" cy="604" rx="17" ry="19" fill="#a9d9ec" opacity=".85" transform="rotate(136 432 604)"/><ellipse cx="244" cy="578" rx="27" ry="11" fill="#d4eef8" opacity=".85" transform="rotate(175 244 578)"/><ellipse cx="196" cy="768" rx="33" ry="19" fill="#d4eef8" opacity=".85" transform="rotate(146 196 768)"/><ellipse cx="809" cy="856" rx="29" ry="10" fill="#d4eef8" opacity=".85" transform="rotate(132 809 856)"/><ellipse cx="191" cy="991" rx="25" ry="19" fill="#bfe4f2" opacity=".85" transform="rotate(99 191 991)"/><ellipse cx="406" cy="532" rx="29" ry="20" fill="#bfe4f2" opacity=".85" transform="rotate(47 406 532)"/><ellipse cx="524" cy="544" rx="19" ry="12" fill="#d4eef8" opacity=".85" transform="rotate(37 524 544)"/><ellipse cx="222" cy="750" rx="30" ry="14" fill="#bfe4f2" opacity=".85" transform="rotate(99 222 750)"/><ellipse cx="405" cy="506" rx="20" ry="13" fill="#a9d9ec" opacity=".85" transform="rotate(103 405 506)"/><ellipse cx="218" cy="786" rx="25" ry="14" fill="#a9d9ec" opacity=".85" transform="rotate(61 218 786)"/><ellipse cx="534" cy="540" rx="28" ry="15" fill="#bfe4f2" opacity=".85" transform="rotate(142 534 540)"/><ellipse cx="713" cy="543" rx="28" ry="14" fill="#a9d9ec" opacity=".85" transform="rotate(56 713 543)"/><ellipse cx="451" cy="590" rx="30" ry="20" fill="#a9d9ec" opacity=".85" transform="rotate(88 451 590)"/><ellipse cx="729" cy="598" rx="31" ry="20" fill="#a9d9ec" opacity=".85" transform="rotate(45 729 598)"/><ellipse cx="299" cy="616" rx="18" ry="18" fill="#d4eef8" opacity=".85" transform="rotate(126 299 616)"/></g><path d="M355 462 Q480 492 600 466" stroke="#8fc8de" stroke-width="10" fill="none"/><path d="M300 560 Q400 590 480 575 Q560 620 700 585 L735 640 H268Z" fill="#a4d6e8" opacity=".85"/><path d="M272 650 Q300 625 340 618 Q500 655 690 612 Q720 625 730 650 L700 850 L722 1062 H252 L292 850Z" fill="url(#p3d)"/><path d="M380 700 Q395 880 380 1062 M640 700 Q625 880 645 1062" stroke="#86bcd2" stroke-width="6" fill="none" opacity=".6"/><path d="M395 130 C350 230 352 330 300 420 C285 450 250 440 240 455 C260 492 320 497 345 480 C375 430 392 380 395 300Z M605 130 C640 230 640 330 680 400 C720 450 770 480 776 542 C730 547 680 512 640 470 C615 420 605 370 602 300Z" fill="#8a5a32"/><path d="M380 180 C345 280 350 350 290 440 M350 330 C340 400 300 450 260 470 M620 180 C650 290 660 360 720 450 M650 360 C680 440 730 480 765 525" stroke="#c08c54" stroke-width="13" fill="none" opacity=".65" stroke-linecap="round"/><path d="M388 230 C385 70 600 70 598 230 C600 330 570 400 530 435 C505 450 480 450 455 435 C415 400 386 330 388 230Z" fill="url(#fg3)"/><path d="M384 280 C372 160 420 60 500 35 C578 55 625 160 606 280 C598 190 566 130 500 92 C436 130 398 190 384 280Z" fill="#80502c"/><path d="M420 150 C440 100 470 75 498 65 M580 150 C560 100 530 75 503 65" stroke="#b88850" stroke-width="10" fill="none" opacity=".6"/><path d="M499 35 L500 95" stroke="#d8ac7c" stroke-width="5"/><ellipse cx="436" cy="246" rx="19" ry="9" fill="#f4ece6" opacity=".8"/><circle cx="436" cy="246" r="8.5" fill="#4a6a80"/><path d="M415 243 Q436 232 457 243" stroke="#4a6a80" stroke-width="4.500" fill="none" opacity=".85"/><ellipse cx="546" cy="246" rx="19" ry="9" fill="#f4ece6" opacity=".8"/><circle cx="546" cy="246" r="8.5" fill="#4a6a80"/><path d="M525 243 Q546 232 567 243" stroke="#4a6a80" stroke-width="4.500" fill="none" opacity=".85"/><path d="M405 224 Q436.5 209 468 218" stroke="#6a4428" stroke-width="7" stroke-linecap="round" fill="none" opacity=".85"/><path d="M518 218 Q549.0 209 580 224" stroke="#6a4428" stroke-width="7" stroke-linecap="round" fill="none" opacity=".85"/><path d="M453.0 366 Q490 354 527.0 366 Q490 384 453.0 366Z" fill="#c4847a"/><path d="M472 322 Q492 334 512 322" stroke="#c08a6a" stroke-width="6" fill="none" opacity=".8" stroke-linecap="round"/></g></svg>
<div style="left:17px;top:638.5px;width:123.9px;height:23px;background:#3a3a3a"></div>
<span class="t" style="left:18.30px;top:641.57px;font-size:18.7px;color:#fff;letter-spacing:0.076px;">Akanjo manga</span>
<span class="t" style="left:18.30px;top:769.03px;font-size:11.3px;color:#fff;letter-spacing:-0.474px;">20.00 USD</span>
<span class="t" style="left:18.30px;top:781.83px;font-size:11.3px;color:#fff;letter-spacing:0.038px;">172.000 vondrona</span>
<div style="left:401px;top:651.3px;width:9.5px;height:1.8px;background:#b4f5a5"></div>
<div style="left:404.8px;top:647.5px;width:1.8px;height:9.5px;background:#b4f5a5"></div>
<div style="left:427px;top:630px;width:408px;height:170px;background:linear-gradient(#383838,#707070);border:1px solid #9a9a9a"></div>
<svg style="left:686px;top:628px" width="150" height="174" viewBox="0 0 931 1080"><defs><clipPath id="pc4"><rect x="0" y="19" width="918" height="1042"/></clipPath><radialGradient id="fg4" cx=".5" cy=".45" r=".62"><stop offset="0" stop-color="#f6cdb0"/><stop offset=".7" stop-color="#ebb694"/><stop offset="1" stop-color="#cf9774"/></radialGradient><linearGradient id="p4s" x1="0" y1="0" x2="1" y2="0"><stop offset="0" stop-color="#2b3f80"/><stop offset=".5" stop-color="#344c94"/><stop offset="1" stop-color="#293c7c"/></linearGradient><linearGradient id="p4h" x1="0" y1="0" x2="0" y2="1"><stop offset="0" stop-color="#8e5632"/><stop offset="1" stop-color="#4a2a1a"/></linearGradient></defs><g clip-path="url(#pc4)"><path d="M400 465 L320 512 L205 540 Q160 552 150 600 L125 720 L98 1062 H882 L862 720 L842 595 Q835 552 795 540 L692 512 L612 465Z" fill="url(#p4s)"/><path d="M420 370 H592 L605 440 H408Z" fill="#d59c78"/><path d="M398 428 Q505 455 612 428 L612 560 L580 1062 H450 L410 560Z" fill="#1b2568"/><path d="M500 620 V1062" stroke="#141c54" stroke-width="10"/><circle cx="500" cy="775" r="8" fill="#c8c8d8"/><circle cx="497" cy="635" r="5" fill="#0e1440"/><path d="M400 465 L318 515 L348 700 L446 990 L455 1062 H462 L452 900 L410 600Z" fill="#3a56a2"/><path d="M612 465 L694 515 L664 700 L580 985 L570 1062 H563 L575 900 L605 600Z" fill="#3a56a2"/><path d="M318 515 L348 700 L446 990 M694 515 L664 700 L580 985" stroke="#223268" stroke-width="4" fill="none"/><path d="M408 488 L500 520 L412 558 Q400 520 408 488Z M597 478 L506 520 L595 548 Q605 512 597 478Z" fill="#3c3254"/><path d="M425 505 L470 520 L430 540 M580 495 L535 518 L578 532" stroke="#a08aa0" stroke-width="7" fill="none" opacity=".8"/><rect x="485" y="505" width="32" height="30" rx="6" fill="#463a5c"/><path d="M645 752 L765 745 L766 760 L646 768Z" fill="#4c74bc"/><path d="M218 960 L206 1062 M790 965 L802 1062" stroke="#e8e8f0" stroke-width="7"/><path d="M230 700 L215 960 M775 700 L790 965" stroke="#22336c" stroke-width="6" opacity=".7"/><ellipse cx="384" cy="262" rx="18" ry="40" fill="#dca282"/><ellipse cx="636" cy="262" rx="18" ry="40" fill="#dca282"/><path d="M398 110 H622 C626 290 615 360 588 410 C560 455 465 455 436 410 C408 360 396 290 398 110Z" fill="url(#fg4)"/><path d="M406 320 C416 380 428 400 436 410 C465 455 560 455 588 410 C598 395 610 370 616 320 C592 392 562 344 512 344 C466 344 436 392 406 320Z" fill="#8a5c40" opacity=".34"/><path d="M392 225 C372 190 372 140 395 100 C430 50 500 18 575 38 C625 55 642 120 630 190 C628 205 626 215 622 225 C618 195 610 170 598 150 C555 118 455 120 418 155 C400 180 396 205 392 225Z" fill="url(#p4h)"/><path d="M415 95 C470 40 550 35 605 85" stroke="#b0703c" stroke-width="13" fill="none" opacity=".55" stroke-linecap="round"/><ellipse cx="446" cy="248" rx="19" ry="9" fill="#f4ece6" opacity=".8"/><circle cx="446" cy="248" r="8.5" fill="#3a2c24"/><path d="M425 245 Q446 234 467 245" stroke="#3a2c24" stroke-width="4.500" fill="none" opacity=".85"/><ellipse cx="558" cy="248" rx="19" ry="9" fill="#f4ece6" opacity=".8"/><circle cx="558" cy="248" r="8.5" fill="#3a2c24"/><path d="M537 245 Q558 234 579 245" stroke="#3a2c24" stroke-width="4.500" fill="none" opacity=".85"/><path d="M418 227 Q450.0 213 482 222" stroke="#3a2418" stroke-width="9" stroke-linecap="round" fill="none" opacity=".85"/><path d="M530 222 Q562.5 213 595 227" stroke="#3a2418" stroke-width="9" stroke-linecap="round" fill="none" opacity=".85"/><path d="M475.0 370 Q510 358 545.0 370 Q510 388 475.0 370Z" fill="#c8857a"/><path d="M490 322 Q510 334 530 322" stroke="#c08a6a" stroke-width="6" fill="none" opacity=".8" stroke-linecap="round"/><path d="M464 350 Q510 340 558 350" stroke="#7a523a" stroke-width="7" fill="none" stroke-linecap="round" opacity=".8"/></g></svg>
<div style="left:433px;top:638.5px;width:123.9px;height:23px;background:#3a3a3a"></div>
<span class="t" style="left:434.30px;top:641.57px;font-size:18.7px;color:#fff;letter-spacing:0.076px;">Akanjo manga</span>
<span class="t" style="left:434.30px;top:769.03px;font-size:11.3px;color:#fff;letter-spacing:-0.474px;">15.00 USD</span>
<span class="t" style="left:434.30px;top:781.83px;font-size:11.3px;color:#fff;letter-spacing:0.092px;">4.000 vondrona</span>
<div style="left:817px;top:651.3px;width:9.5px;height:1.8px;background:#b4f5a5"></div>
<div style="left:820.8px;top:647.5px;width:1.8px;height:9.5px;background:#b4f5a5"></div>
<div style="left:11px;top:808px;width:408px;height:170px;background:linear-gradient(#383838,#707070);border:1px solid #9a9a9a"></div>
<svg style="left:270px;top:806px" width="150" height="174" viewBox="0 0 931 1080"><defs><clipPath id="pc5"><rect x="0" y="19" width="918" height="1042"/></clipPath><radialGradient id="fg5" cx=".5" cy=".45" r=".62"><stop offset="0" stop-color="#f6cdb0"/><stop offset=".7" stop-color="#ebb694"/><stop offset="1" stop-color="#cf9774"/></radialGradient><linearGradient id="p5h" x1="0" y1="0" x2="1" y2="0"><stop offset="0" stop-color="#7e4c2e"/><stop offset=".5" stop-color="#5e3822"/><stop offset="1" stop-color="#8a5632"/></linearGradient><linearGradient id="p5d" x1="0" y1="0" x2="1" y2="1"><stop offset="0" stop-color="#f7e24c"/><stop offset="1" stop-color="#ecc92e"/></linearGradient></defs><g clip-path="url(#pc5)"><path d="M450 22 C395 25 345 80 322 150 C305 230 302 330 292 420 L280 498 L345 492 L640 460 C600 300 600 200 585 130 C560 60 510 22 450 22Z" fill="url(#p5h)"/><path d="M205 795 L262 850 L272 960 L232 1062 H180 L198 900Z" fill="#e0a07a"/><path d="M680 740 L800 650 L800 900 L838 1062 H700 L640 940 L655 820Z" fill="#e0a07a"/><path d="M392 370 H565 L580 505 L425 618 L338 490Z" fill="#dc9e78"/><path d="M340 486 L215 542 Q178 562 162 640 L130 722 L232 812 L272 930 L222 1062 H700 L640 940 L662 800 L702 762 L852 632 L775 510 Q745 480 660 470 L545 500 L425 618Z" fill="url(#p5d)"/><path d="M425 618 L600 800 L640 940 M272 930 Q450 900 640 940 M275 968 Q450 988 640 952 M340 486 L425 618 L545 500 M232 812 Q260 760 250 700" stroke="#d9b425" stroke-width="7" fill="none" opacity=".7"/><path d="M545 120 C585 200 600 320 630 440 C665 540 685 650 672 790 C660 860 620 910 600 935 C600 800 595 650 575 540 C560 470 545 420 540 380Z" fill="#7a4a2c"/><path d="M600 330 C640 480 660 640 640 820 M335 180 C320 280 315 380 300 480" stroke="#9a643c" stroke-width="14" fill="none" opacity=".7"/><path d="M352 220 C348 70 558 70 555 220 C556 310 530 370 495 402 C470 418 440 418 415 402 C375 370 350 310 352 220Z" fill="url(#fg5)"/><path d="M346 290 C330 180 370 70 450 36 C530 60 580 160 562 290 C554 200 535 140 490 110 C425 112 372 170 346 290Z" fill="#5e3822"/><path d="M380 130 C400 80 430 55 452 48 M530 130 C510 85 480 58 455 48" stroke="#8a5632" stroke-width="10" fill="none" opacity=".7"/><ellipse cx="398" cy="238" rx="19" ry="9" fill="#f4ece6" opacity=".8"/><circle cx="398" cy="238" r="8.5" fill="#3a2c24"/><path d="M377 235 Q398 224 419 235" stroke="#3a2c24" stroke-width="4.500" fill="none" opacity=".85"/><ellipse cx="506" cy="238" rx="19" ry="9" fill="#f4ece6" opacity=".8"/><circle cx="506" cy="238" r="8.5" fill="#3a2c24"/><path d="M485 235 Q506 224 527 235" stroke="#3a2c24" stroke-width="4.500" fill="none" opacity=".85"/><path d="M370 214 Q401.0 201 432 210" stroke="#4a2c1c" stroke-width="8" stroke-linecap="round" fill="none" opacity=".85"/><path d="M476 210 Q508.0 201 540 216" stroke="#4a2c1c" stroke-width="8" stroke-linecap="round" fill="none" opacity=".85"/><path d="M407.0 325 Q450 333 493.0 325 Q450 360 407.0 325Z" fill="#d66a80"/><path d="M432 298 Q452 310 472 298" stroke="#c08a6a" stroke-width="6" fill="none" opacity=".8" stroke-linecap="round"/></g></svg>
<div style="left:17px;top:816.5px;width:112.0px;height:23px;background:#3a3a3a"></div>
<span class="t" style="left:18.30px;top:819.57px;font-size:18.7px;color:#fff;letter-spacing:0.043px;">Akanjo mavo</span>
<span class="t" style="left:18.30px;top:947.03px;font-size:11.3px;color:#fff;letter-spacing:-0.448px;">9.50 USD</span>
<span class="t" style="left:18.30px;top:959.83px;font-size:11.3px;color:#fff;letter-spacing:0.013px;">57.000 vondrona</span>
<div style="left:427px;top:808px;width:408px;height:170px;background:linear-gradient(#383838,#707070);border:1px solid #9a9a9a"></div>
<svg style="left:686px;top:806px" width="150" height="174" viewBox="0 0 931 1080"><defs><clipPath id="pc6"><rect x="0" y="19" width="918" height="1042"/></clipPath><radialGradient id="fg6" cx=".5" cy=".45" r=".62"><stop offset="0" stop-color="#f6cdb0"/><stop offset=".7" stop-color="#ebb694"/><stop offset="1" stop-color="#cf9774"/></radialGradient><linearGradient id="p6h" x1="0" y1="0" x2="1" y2="0"><stop offset="0" stop-color="#8a583e"/><stop offset=".5" stop-color="#aa7656"/><stop offset="1" stop-color="#8a583e"/></linearGradient><linearGradient id="p6d" x1="0" y1="0" x2="1" y2="0"><stop offset="0" stop-color="#e88f90"/><stop offset=".5" stop-color="#f7aeac"/><stop offset="1" stop-color="#e68c8e"/></linearGradient><linearGradient id="p6k" x1="0" y1="0" x2="0" y2="1"><stop offset="0" stop-color="#dc9c76"/><stop offset="1" stop-color="#ecb490"/></linearGradient></defs><g clip-path="url(#pc6)"><path d="M510 22 C440 25 390 90 368 180 C345 280 335 400 335 480 C345 525 400 560 445 565 L600 548 C660 540 705 500 715 420 C715 320 700 220 675 150 C640 60 580 22 510 22Z" fill="url(#p6h)"/><path d="M440 440 H600 L622 560 Q700 575 770 602 Q850 640 872 745 V800 H128 V665 Q140 590 235 548 Q330 540 430 560Z" fill="url(#p6k)"/><path d="M442 475 C470 565 580 565 602 475 L622 562 L430 562Z" fill="#c58660" opacity=".55"/><path d="M128 650 Q260 672 400 702 Q640 722 874 735 L882 1062 H100 L110 760Z" fill="url(#p6d)"/><path d="M225 690 L245 1062 M330 705 L300 1062 M665 728 L640 1062 M775 735 L745 1062" stroke="#dc8486" stroke-width="7" fill="none" opacity=".6"/><path d="M128 656 Q260 678 400 708 Q640 728 874 741" stroke="#f9c4c2" stroke-width="8" fill="none"/><path d="M412 250 C408 70 642 70 638 250 C640 350 615 420 570 465 C545 488 505 488 480 465 C435 420 410 350 412 250Z" fill="url(#fg6)"/><path d="M510 28 C440 60 410 160 415 270 C418 360 425 460 445 565 C390 555 345 525 335 480 C335 380 345 280 368 180 C390 90 440 25 510 28Z" fill="#8c5a40"/><path d="M510 28 C590 50 635 160 635 270 C640 360 625 460 600 548 C660 540 705 500 715 420 C715 320 700 220 675 150 C640 60 580 22 510 28Z" fill="#97644a"/><path d="M510 28 C470 60 435 110 418 215 C440 150 480 115 512 102 C550 112 605 150 634 220 C622 120 570 50 510 28Z" fill="#a06e50"/><path d="M385 200 C365 300 360 400 375 500 M665 180 C690 280 695 380 680 480" stroke="#b88462" stroke-width="14" fill="none" opacity=".6"/><ellipse cx="464" cy="266" rx="19" ry="9" fill="#f4ece6" opacity=".8"/><circle cx="464" cy="266" r="8.5" fill="#3a2c24"/><path d="M443 263 Q464 252 485 263" stroke="#3a2c24" stroke-width="4.500" fill="none" opacity=".85"/><ellipse cx="586" cy="262" rx="19" ry="9" fill="#f4ece6" opacity=".8"/><circle cx="586" cy="262" r="8.5" fill="#3a2c24"/><path d="M565 259 Q586 248 607 259" stroke="#3a2c24" stroke-width="4.500" fill="none" opacity=".85"/><path d="M432 242 Q464.5 229 497 238" stroke="#5a3a28" stroke-width="7" stroke-linecap="round" fill="none" opacity=".85"/><path d="M556 236 Q587.0 227 618 240" stroke="#5a3a28" stroke-width="7" stroke-linecap="round" fill="none" opacity=".85"/><path d="M481.0 395 Q526 403 571.0 395 Q526 430 481.0 395Z" fill="#cc7484"/><path d="M510 350 Q530 362 550 350" stroke="#c08a6a" stroke-width="6" fill="none" opacity=".8" stroke-linecap="round"/></g></svg>
<div style="left:433px;top:816.5px;width:145.2px;height:23px;background:#3a3a3a"></div>
<span class="t" style="left:434.30px;top:819.57px;font-size:18.7px;color:#fff;letter-spacing:0.029px;">Akanjo mavokely</span>
<span class="t" style="left:434.30px;top:947.03px;font-size:11.3px;color:#fff;letter-spacing:-0.448px;">9.00 USD</span>
<span class="t" style="left:434.30px;top:959.83px;font-size:11.3px;color:#fff;letter-spacing:0.092px;">5.000 vondrona</span>
<div style="left:3px;top:1033px;width:49px;height:41px;border:1px solid #d0d0d0;border-radius:3px;background:linear-gradient(#f4f4f4,#e4e4e4)"></div>
<div style="left:54px;top:1033px;width:49px;height:41px;border:1px solid #d0d0d0;border-radius:3px;background:linear-gradient(#f4f4f4,#e4e4e4)"></div>
<div style="left:887px;top:532px;width:1px;height:1px;background:#666"></div>
<div style="left:887px;top:534px;width:1px;height:1px;background:#666"></div>
<div style="left:887px;top:536px;width:1px;height:1px;background:#666"></div>
<div style="left:887px;top:538px;width:1px;height:1px;background:#666"></div>
<div style="left:887px;top:540px;width:1px;height:1px;background:#666"></div>
<div style="left:887px;top:542px;width:1px;height:1px;background:#666"></div>
<div style="left:887px;top:544px;width:1px;height:1px;background:#666"></div>
<div style="left:887px;top:546px;width:1px;height:1px;background:#666"></div>
<div style="left:894px;top:0px;width:1025px;height:1080px;border:1px solid;border-color:#b4aaa0 #d6d6d6 #cfcfcf #bababa;background:#fff"></div>
<div style="left:895px;top:1px;width:1023px;height:42px;background:#00a8ff"></div>
<span class="t" style="left:1347.30px;top:8.40px;font-size:28px;color:#fff;letter-spacing:-0.517px;">fivarotana</span>
<svg style="left:1884px;top:8px" width="28" height="28" viewBox="1884 8 28 28"><path d="M1889.6 13.2 L1907.2 30.8 M1907.2 13.2 L1889.6 30.800" stroke="#fff" stroke-width="4.600" stroke-linecap="square"/><path d="M1889.6 13.2 L1907.2 30.8 M1907.2 13.2 L1889.6 30.8" stroke="#000" stroke-width="2.300" stroke-linecap="square"/></svg>
<span class="t" style="left:897.20px;top:56.29px;font-size:11px;color:#222;letter-spacing:0.023px;">Mpivarotra</span>
<span class="t" style="left:897.20px;top:87.79px;font-size:11px;color:#222;letter-spacing:-0.044px;">mpanjifa (F10)</span>
<div style="left:988px;top:44px;width:35px;height:34px;border:1px solid #d4d4d4;border-radius:3px;background:linear-gradient(#f2f2f2,#e2e2e2)"></div>
<div style="left:1024px;top:46px;width:446px;height:29px;border:1px solid #c0c0c0;background:#f5f5f5"></div>
<svg style="left:1453px;top:59.0px" width="8" height="5" viewBox="0 0 8 5"><path d="M0.5 0.5H7.5L4 4.5Z" fill="#a8a8a8"/></svg>
<div style="left:1472px;top:46px;width:446px;height:29px;border:1px solid #c0c0c0;background:#f5f5f5"></div>
<svg style="left:1901px;top:59.0px" width="8" height="5" viewBox="0 0 8 5"><path d="M0.5 0.5H7.5L4 4.5Z" fill="#a8a8a8"/></svg>
<div style="left:1024px;top:78px;width:446px;height:28px;border:1px solid #b8b8b8;background:#fff"></div>
<div style="left:1472px;top:78px;width:446px;height:28px;border:1px solid #c0c0c0;background:#f5f5f5"></div>
<svg style="left:1901px;top:90.5px" width="8" height="5" viewBox="0 0 8 5"><path d="M0.5 0.5H7.5L4 4.5Z" fill="#a8a8a8"/></svg>
<span class="t" style="left:1026.30px;top:54.32px;font-size:12.5px;color:#b4b4b4;font-weight:700;transform:scaleX(1.0976);transform-origin:0 0;">Mpiasa #2</span>
<span class="t" style="left:1474.50px;top:54.32px;font-size:12.5px;color:#b4b4b4;font-weight:700;transform:scaleX(1.1204);transform-origin:0 0;">Anarana ara-dalàna</span>
<span class="t" style="left:1474.50px;top:85.52px;font-size:12.5px;color:#b4b4b4;font-weight:700;transform:scaleX(1.1381);transform-origin:0 0;">09.12.2022</span>
<span class="t" style="left:898.10px;top:115.72px;font-size:12.5px;color:#222;font-weight:700;transform:scaleX(1.0889);transform-origin:0 0;">mpanjifa default, Bez atlaides</span>
<div style="left:895px;top:137px;width:1023px;height:26px;background:#00a8ff"></div>
<span class="t" style="left:1350.30px;top:145.32px;font-size:12.5px;color:#fff;font-weight:700;transform:scaleX(1.1179);transform-origin:0 0;">Lisitry ny varotra</span>
<span class="t" style="left:899.40px;top:169.19px;font-size:11px;color:#222;letter-spacing:-0.070px;">Isany (F7) sy Barcode (F8)</span>
<span class="t" style="left:1472.60px;top:168.99px;font-size:11px;color:#222;letter-spacing:0.016px;">Anaran&#x27;ny vokatra</span>
<div style="left:899px;top:182px;width:99px;height:29px;border:1px solid #b8b8b8;background:#fff"></div>
<div style="left:1024px;top:182px;width:446px;height:29px;border:1px solid #b8b8b8;background:#fff"></div>
<div style="left:1472px;top:182px;width:446px;height:29px;border:1px solid #b8b8b8;background:#fff"></div>
<span class="t" style="left:902.50px;top:186.87px;font-size:18.7px;color:#2d2d2d;font-weight:700;transform:scaleX(1.1119);transform-origin:0 0;">1.000</span>
<span class="t" style="left:1026.25px;top:186.87px;font-size:18.7px;color:#2d2d2d;font-weight:700;transform:scaleX(1.1493);transform-origin:0 0;">0000000000000</span>
<span class="t" style="left:1006.00px;top:187.11px;font-size:17px;color:#333;letter-spacing:-0.100px;">x</span>
<svg style="left:981px;top:188px" width="8" height="18" viewBox="0 0 8 18"><path d="M0.5 4.5H7.5L4 0.8Z M0.5 13H7.5L4 16.7Z" fill="#666"/></svg>
<div style="left:895px;top:213px;width:1023px;height:680px;border:1px solid #b0b0b0;background:#fff"></div>
<div style="left:896px;top:214px;width:1021px;height:46px;background:#f5f5f5;border-bottom:1px solid #b0b0b0"></div>
<div style="left:907px;top:214px;width:1px;height:45px;background:#b8b8b8"></div>
<div style="left:1367px;top:214px;width:1px;height:45px;background:#b8b8b8"></div>
<div style="left:1507px;top:214px;width:1px;height:45px;background:#b8b8b8"></div>
<div style="left:1644px;top:214px;width:1px;height:45px;background:#b8b8b8"></div>
<div style="left:1743px;top:214px;width:1px;height:45px;background:#b8b8b8"></div>
<span class="t" style="left:909.70px;top:229.56px;font-size:16px;color:#2a2a3a;letter-spacing:-0.343px;">Anarana</span>
<span class="t" style="left:1370.00px;top:229.56px;font-size:16px;color:#2a2a3a;letter-spacing:-0.156px;">Discount</span>
<span class="t" style="left:1510.20px;top:229.56px;font-size:16px;color:#2a2a3a;letter-spacing:0.051px;">Vidiny</span>
<span class="t" style="left:1647.30px;top:229.56px;font-size:16px;color:#2a2a3a;letter-spacing:-0.240px;">vola</span>
<span class="t" style="left:1746.20px;top:229.56px;font-size:16px;color:#2a2a3a;letter-spacing:-0.240px;">vola</span>
<div style="left:896px;top:260px;width:11px;height:47px;background:#f5f5f5;border-bottom:1px solid #b0b0b0;border-right:1px solid #b8b8b8"></div>
<div style="left:907px;top:260px;width:1010px;height:47px;background:#d9f1ff;border-bottom:1px solid #b0b0b0"></div>
<span class="t" style="left:909.25px;top:275.66px;font-size:16px;color:#2a2a3a;letter-spacing:0.154px;">1. Akanjo maitso ho an&#x27;ny lehilahy, 10003, vondrona</span>
<span class="t" style="left:1473.90px;top:275.66px;font-size:16px;color:#2a2a3a;letter-spacing:0.140px;">0.00</span>
<span class="t" style="left:1602.60px;top:275.66px;font-size:16px;color:#2a2a3a;letter-spacing:0.071px;">15.00</span>
<span class="t" style="left:1702.00px;top:275.66px;font-size:16px;color:#2a2a3a;letter-spacing:-0.049px;">1.000</span>
<span class="t" style="left:1875.30px;top:275.66px;font-size:16px;color:#2a2a3a;letter-spacing:0.071px;">15.00</span>
<div style="left:896px;top:307px;width:11px;height:47px;background:#f5f5f5;border-bottom:1px solid #b0b0b0;border-right:1px solid #b8b8b8"></div>
<div style="left:907px;top:307px;width:1010px;height:47px;background:#e0fae4;border-bottom:1px solid #b0b0b0"></div>
<span class="t" style="left:909.25px;top:322.66px;font-size:16px;color:#2a2a3a;letter-spacing:0.158px;">2. Akanjo manga, 10002, vondrona</span>
<span class="t" style="left:1473.90px;top:322.66px;font-size:16px;color:#2a2a3a;letter-spacing:0.140px;">0.00</span>
<span class="t" style="left:1602.60px;top:322.66px;font-size:16px;color:#2a2a3a;letter-spacing:0.071px;">15.00</span>
<span class="t" style="left:1702.00px;top:322.66px;font-size:16px;color:#2a2a3a;letter-spacing:-0.049px;">1.000</span>
<span class="t" style="left:1875.30px;top:322.66px;font-size:16px;color:#2a2a3a;letter-spacing:0.071px;">15.00</span>
<div style="left:896px;top:354px;width:11px;height:47px;background:#f5f5f5;border-bottom:1px solid #b0b0b0;border-right:1px solid #b8b8b8"></div>
<div style="left:907px;top:354px;width:1010px;height:47px;background:#d9f1ff;border-bottom:1px solid #b0b0b0"></div>
<span class="t" style="left:909.25px;top:369.66px;font-size:16px;color:#2a2a3a;letter-spacing:0.158px;">3. Akanjo manga, 10004, vondrona</span>
<span class="t" style="left:1473.90px;top:369.66px;font-size:16px;color:#2a2a3a;letter-spacing:0.140px;">0.00</span>
<span class="t" style="left:1602.60px;top:369.66px;font-size:16px;color:#2a2a3a;letter-spacing:0.071px;">20.00</span>
<span class="t" style="left:1702.00px;top:369.66px;font-size:16px;color:#2a2a3a;letter-spacing:-0.049px;">1.000</span>
<span class="t" style="left:1875.30px;top:369.66px;font-size:16px;color:#2a2a3a;letter-spacing:0.071px;">20.00</span>
<div style="left:896px;top:401px;width:11px;height:47px;background:#f5f5f5;border-bottom:1px solid #b0b0b0;border-right:1px solid #b8b8b8"></div>
<div style="left:907px;top:401px;width:1010px;height:47px;background:#e0fae4;border-bottom:1px solid #b0b0b0"></div>
<span class="t" style="left:909.25px;top:416.66px;font-size:16px;color:#2a2a3a;letter-spacing:0.213px;">4. Akanjo mainty hoditra, 10001, vondrona</span>
<span class="t" style="left:1473.90px;top:416.66px;font-size:16px;color:#2a2a3a;letter-spacing:0.140px;">0.00</span>
<span class="t" style="left:1602.60px;top:416.66px;font-size:16px;color:#2a2a3a;letter-spacing:0.071px;">15.00</span>
<span class="t" style="left:1702.00px;top:416.66px;font-size:16px;color:#2a2a3a;letter-spacing:-0.049px;">1.000</span>
<span class="t" style="left:1875.30px;top:416.66px;font-size:16px;color:#2a2a3a;letter-spacing:0.071px;">15.00</span>
<svg style="left:899px;top:420px" width="5" height="9" viewBox="0 0 5 9"><path d="M0.5 0.8L4.2 4.5L0.5 8.2Z" fill="#555"/></svg>
<div style="left:896px;top:892px;width:1021px;height:43px;background:#f5f5f5;border-top:1px solid #c4c4c4"></div>
<div style="left:909px;top:895px;width:457px;height:37px;border:1px solid #d0d0d0;background:#fff"></div>
<div style="left:1370px;top:895px;width:136px;height:37px;border:1px solid #d0d0d0;background:#fff"></div>
<div style="left:1647px;top:895px;width:95px;height:37px;border:1px solid #d0d0d0;background:#fff"></div>
<span class="t" style="left:915.20px;top:903.12px;font-size:21px;color:#333;font-weight:700;transform:scaleX(1.1130);transform-origin:0 0;">65.00</span>
<span class="t" style="left:1487.20px;top:903.12px;font-size:21px;color:#333;font-weight:700;transform:scaleX(1.0695);transform-origin:0 0;">0</span>
<span class="t" style="left:1723.60px;top:903.12px;font-size:21px;color:#333;font-weight:700;transform:scaleX(1.0524);transform-origin:0 0;">4</span>
<div style="left:895px;top:935px;width:1023px;height:26px;background:#00a8ff"></div>
<span class="t" style="left:1363.00px;top:942.84px;font-size:12px;color:#fff;font-weight:700;transform:scaleX(1.0275);transform-origin:0 0;">FANOMEZANA</span>
<span class="t" style="left:896.25px;top:966.89px;font-size:11px;color:#222;letter-spacing:-0.072px;">Fanamarinana pirinty (F11)</span>
<span class="t" style="left:1152.20px;top:966.89px;font-size:11px;color:#222;letter-spacing:-0.183px;">Karazan-karama (F12)</span>
<span class="t" style="left:1408.70px;top:966.89px;font-size:11px;color:#222;letter-spacing:-0.120px;">Vola avy amin&#x27;ny client (F9)</span>
<span class="t" style="left:1664.90px;top:966.89px;font-size:11px;color:#222;letter-spacing:-0.100px;">Vola hafahafa</span>
<div style="left:896px;top:980px;width:248px;height:29px;border:1px solid #c0c0c0;background:#fff"></div>
<svg style="left:1127px;top:993.0px" width="8" height="5" viewBox="0 0 8 5"><path d="M0.5 0.5H7.5L4 4.5Z" fill="#555"/></svg>
<div style="left:1152px;top:980px;width:248px;height:29px;border:1px solid #c0c0c0;background:#fff"></div>
<svg style="left:1383px;top:993.0px" width="8" height="5" viewBox="0 0 8 5"><path d="M0.5 0.5H7.5L4 4.5Z" fill="#555"/></svg>
<div style="left:1407px;top:980px;width:249px;height:29px;border:1px solid #2a7a2a;background:#3aaa35"></div>
<svg style="left:1638px;top:986px" width="8" height="18" viewBox="0 0 8 18"><path d="M0.5 4.5H7.5L4 0.8Z M0.5 13H7.5L4 16.7Z" fill="#2f7a2c"/></svg>
<span class="t" style="left:899.00px;top:988.02px;font-size:12.5px;color:#2d2d2d;font-weight:700;transform:scaleX(1.0936);transform-origin:0 0;">Tsy misy fizahana (F11)</span>
<span class="t" style="left:1155.00px;top:988.02px;font-size:12.5px;color:#2d2d2d;font-weight:700;transform:scaleX(1.0830);transform-origin:0 0;">Vola</span>
<span class="t" style="left:1410.80px;top:984.67px;font-size:18.7px;color:#2e4a30;font-weight:700;transform:scaleX(1.1162);transform-origin:0 0;">0.00</span>
<span class="t" style="left:1665.40px;top:984.27px;font-size:18.7px;color:#333;font-weight:700;transform:scaleX(1.1604);transform-origin:0 0;">-65.00</span>
<div style="left:895px;top:1012px;width:250px;height:63px;border:1px solid #000;background:#a5eb96"></div>
<div style="left:1151px;top:1012px;width:250px;height:63px;border:1px solid #000;background:#ffffa8"></div>
<div style="left:1407px;top:1012px;width:250px;height:63px;border:1px solid #000;background:#ffdca0"></div>
<div style="left:1663px;top:1012px;width:250px;height:63px;border:1px solid #000;background:#ffa0a0"></div>
<span class="t" style="left:967.10px;top:1030.80px;font-size:22.8px;color:#000;font-weight:700;letter-spacing:-0.101px;">mivarotra</span>
<span class="t" style="left:1224.45px;top:1030.80px;font-size:22.8px;color:#000;font-weight:700;letter-spacing:-0.266px;">ahemotra</span>
<span class="t" style="left:1485.25px;top:1017.70px;font-size:22.8px;color:#000;font-weight:700;letter-spacing:-0.649px;">Tsy misy</span>
<span class="t" style="left:1445.10px;top:1043.50px;font-size:22.8px;color:#000;font-weight:700;letter-spacing:-0.272px;">fandoavam-bola</span>
<span class="t" style="left:1731.80px;top:1030.80px;font-size:22.8px;color:#000;font-weight:700;letter-spacing:-0.424px;">hanafoana</span>
<svg style="left:988px;top:44px" width="35" height="34" viewBox="988 44 35 34"><defs><linearGradient id="lkb" x1="0" y1="0" x2="1" y2="1"><stop offset="0" stop-color="#fbd468"/><stop offset=".5" stop-color="#f0b236"/><stop offset="1" stop-color="#d98a1c"/></linearGradient>
<linearGradient id="lks" x1="0" y1="0" x2="1" y2="0"><stop offset="0" stop-color="#5a6670"/><stop offset=".5" stop-color="#d4dae0"/><stop offset="1" stop-color="#5a6670"/></linearGradient></defs><path d="M996.9 58 V55.5 C996.9 44.300 1013.100 44.300 1013.100 55.5 V58" fill="none" stroke="#56626c" stroke-width="4.200"/><path d="M996.9 58 V55.5 C996.9 44.3 1013.1 44.3 1013.1 55.5 V58" fill="none" stroke="#cfd6dc" stroke-width="1.7"/><rect x="993.3" y="57.2" width="23.4" height="16.5" rx="1.2" fill="url(#lkb)" stroke="#c0681a" stroke-width="1"/><path d="M994.5 58.500 H1015.5" stroke="#fde9a4" stroke-width="1" opacity=".8"/><path d="M1005 60.400 A2.300 2.300 0 0 1 1006.300 64.600 L1007.200 69.800 H1002.800 L1003.700 64.600 A2.300 2.300 0 0 1 1005 60.400Z" fill="#1c1a2c"/></svg>
<svg style="left:0px;top:1033px" width="110" height="42" viewBox="0 1033 110 42"><defs><linearGradient id="tbh" x1="0" y1="0" x2="0" y2="1"><stop offset="0" stop-color="#6a9ad8"/><stop offset="1" stop-color="#3f74bc"/></linearGradient>
<linearGradient id="tlb" x1="0" y1="0" x2="0" y2="1"><stop offset="0" stop-color="#c4def4"/><stop offset="1" stop-color="#78aee0"/></linearGradient></defs><rect x="13.600" y="1039.400" width="27.200" height="26" rx="1" fill="#fdfeff" stroke="#4a80c4" stroke-width="1"/><rect x="14" y="1039.800" width="26.400" height="5.600" fill="url(#tbh)"/><path d="M22.600 1045.400 V1065 M31.600 1045.400 V1065 M14 1050.400 H40.400 M14 1055.300 H40.400 M14 1060.200 H40.400" stroke="#6ea0dc" stroke-width="1" fill="none"/><rect x="63.3" y="1040.5" width="13.300" height="6.900" rx="1" fill="url(#tlb)" stroke="#4a80c4" stroke-width="1"/><rect x="63.3" y="1049.5" width="13.300" height="6.900" rx="1" fill="url(#tlb)" stroke="#4a80c4" stroke-width="1"/><rect x="63.3" y="1058.5" width="13.300" height="6.900" rx="1" fill="url(#tlb)" stroke="#4a80c4" stroke-width="1"/><rect x="78.4" y="1040.5" width="13.300" height="6.900" rx="1" fill="url(#tlb)" stroke="#4a80c4" stroke-width="1"/><rect x="78.4" y="1049.5" width="13.300" height="6.900" rx="1" fill="url(#tlb)" stroke="#4a80c4" stroke-width="1"/><rect x="78.4" y="1058.5" width="13.300" height="6.900" rx="1" fill="url(#tlb)" stroke="#4a80c4" stroke-width="1"/></svg>
</body></html>
